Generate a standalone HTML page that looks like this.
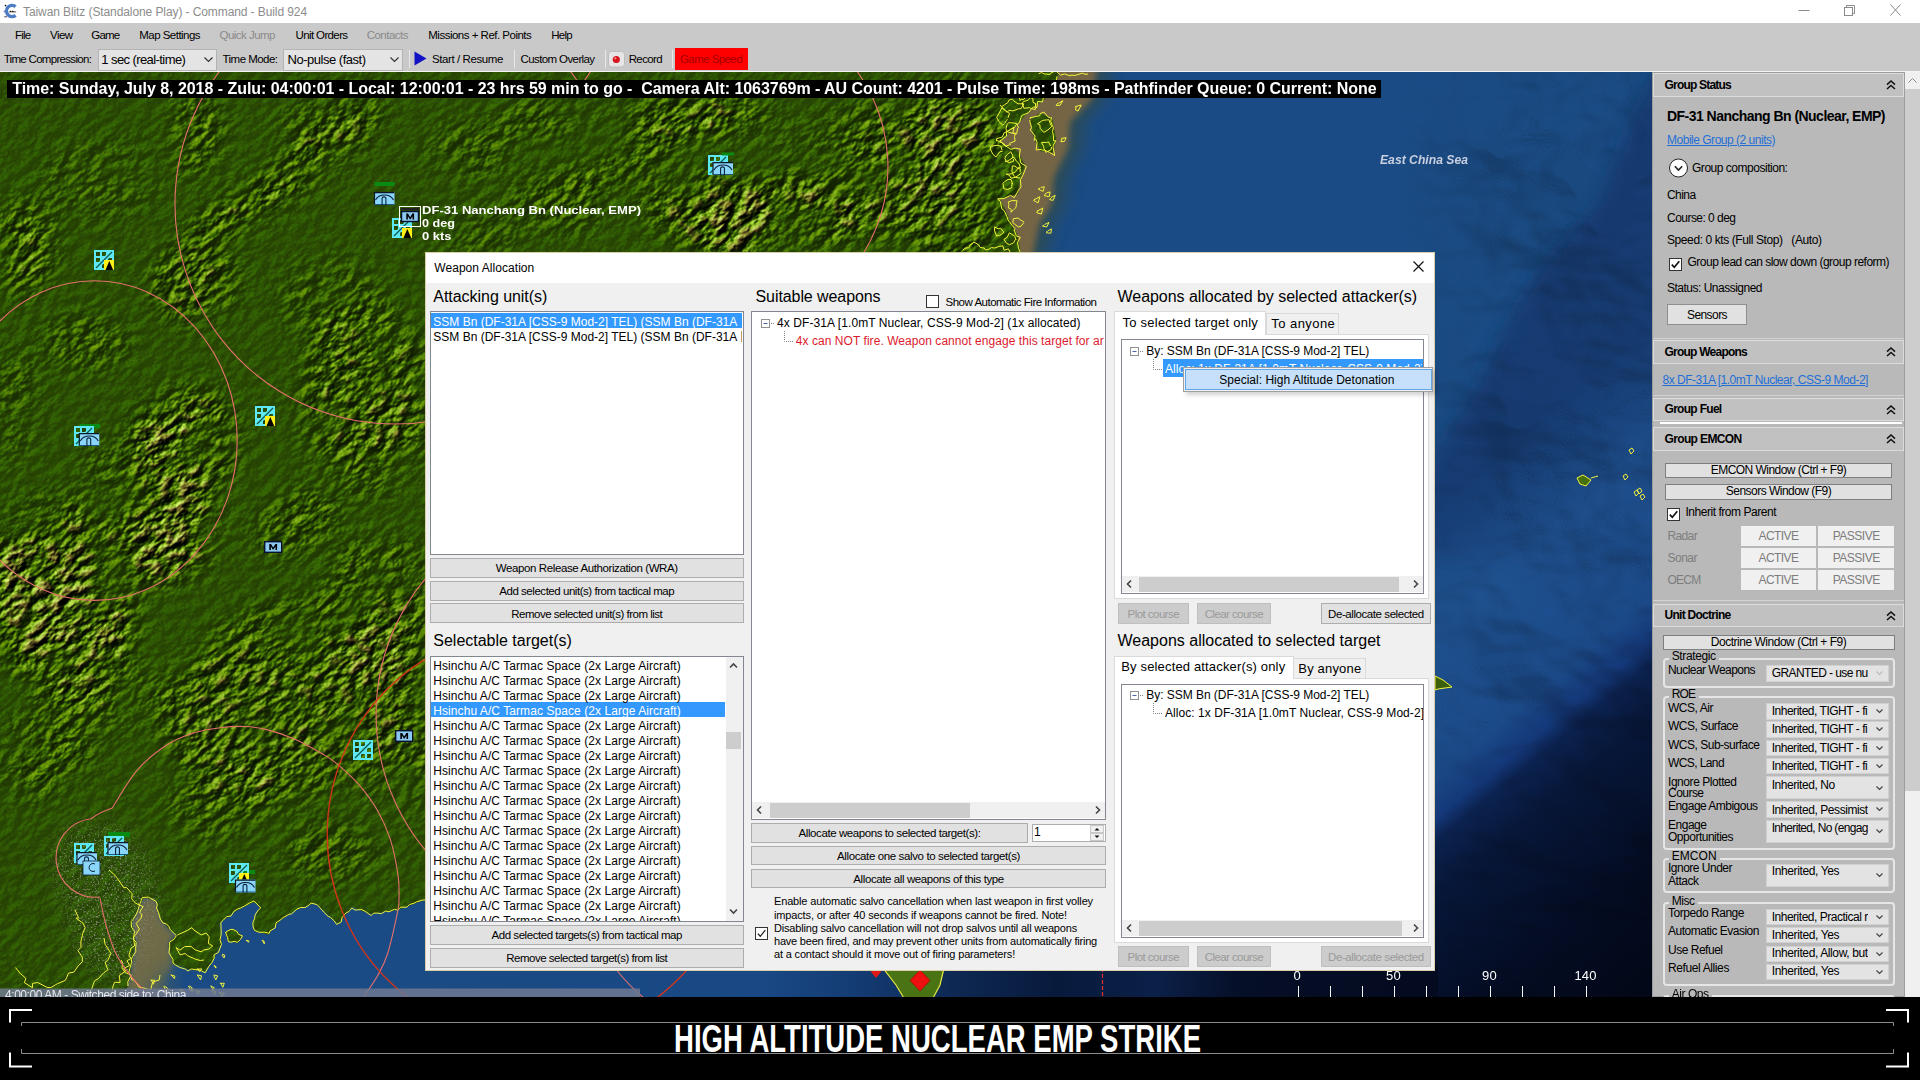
<!DOCTYPE html><html><head><meta charset="utf-8"><title>Command</title><style>

html,body{margin:0;padding:0;}
body{width:1920px;height:1080px;overflow:hidden;position:relative;background:#000;font-family:"Liberation Sans",sans-serif;font-size:12px;}
.a{position:absolute;box-sizing:border-box;}
.t{position:absolute;white-space:pre;display:block;}

</style></head><body>
<svg class="a" style="left:0;top:72px" width="1653" height="925" viewBox="0 72 1653 925">
<defs>
<filter id="terr" x="0" y="0" width="100%" height="100%" color-interpolation-filters="sRGB">
 <feColorMatrix in="SourceGraphic" type="matrix" values="0 0 0 0 0  0 0 0 0 0  0 0 0 0 0  1 0 0 0 0" result="ms"/>
 <feTurbulence type="fractalNoise" baseFrequency="0.012 0.015" numOctaves="3" seed="4" result="A"/>
 <feColorMatrix in="A" type="matrix" values="0 0 0 0 0  0 0 0 0 0  0 0 0 0 0  1 0 0 0 0" result="Aa"/>
 <feComponentTransfer in="Aa" result="mn"><feFuncA type="table" tableValues="0.3 0.3 0.3 0.45 0.8 1 1 1 1 1"/></feComponentTransfer>
 <feComposite in="ms" in2="mn" operator="in" result="m1"/>
 <feComponentTransfer in="m1" result="mask"><feFuncA type="linear" slope="0.86" intercept="0.14"/></feComponentTransfer>
 <feTurbulence type="fractalNoise" baseFrequency="0.07 0.11" numOctaves="4" seed="21" result="B"/>
 <feColorMatrix in="B" type="matrix" values="0 0 0 0 0  0 0 0 0 0  0 0 0 0 0  0 1 0 0 0" result="hB"/>
 <feDiffuseLighting in="hB" surfaceScale="5.5" diffuseConstant="1" lighting-color="#e4ffb0" result="lit"><feDistantLight azimuth="262" elevation="30"/></feDiffuseLighting>
 <feComposite in="lit" in2="mask" operator="in" result="litm"/>
 <feFlood flood-color="#728058" result="neutral"/>
 <feComposite in="litm" in2="neutral" operator="over" result="lit2"/>
 <feFlood flood-color="#335005" result="base"/>
 <feFlood flood-color="#80603a" result="brn"/>
 <feComposite in="hB" in2="mask" operator="in" result="hm0"/>
 <feColorMatrix in="hm0" type="matrix" values="0 0 0 0 0  0 0 0 0 0  0 0 0 0 0  0 0 0 5 -2.15" result="hm"/>
 <feComposite in="brn" in2="hm" operator="in" result="brn2"/>
 <feComposite in="brn2" in2="base" operator="over" result="col"/>
 <feBlend in="lit2" in2="col" mode="hard-light" result="sh"/>
 <feTurbulence type="fractalNoise" baseFrequency="0.5" numOctaves="2" seed="3" result="fine"/>
 <feColorMatrix in="fine" type="matrix" values="0 0 0 0 0.07  0 0 0 0 0.13  0 0 0 0 0  0 1.0 0 0 -0.47" result="spk"/>
 <feComposite in="spk" in2="sh" operator="over" result="all"/>
 <feComposite in="all" in2="SourceAlpha" operator="in"/>
</filter>
<filter id="urb" x="-20%" y="-20%" width="140%" height="140%" color-interpolation-filters="sRGB"><feGaussianBlur in="SourceAlpha" stdDeviation="10" result="m"/><feTurbulence type="fractalNoise" baseFrequency="0.55" numOctaves="2" seed="8" result="n"/><feColorMatrix in="n" type="matrix" values="0 0 0 0 0.52  0 0 0 0 0.55  0 0 0 0 0.47  0 0 3.4 0 -1.75" result="d"/><feComposite in="d" in2="m" operator="in"/></filter>
<filter id="b3"><feGaussianBlur stdDeviation="3"/></filter>
<filter id="b8"><feGaussianBlur stdDeviation="8"/></filter>
<filter id="b12"><feGaussianBlur stdDeviation="12"/></filter>
<filter id="b20"><feGaussianBlur stdDeviation="20"/></filter>
<filter id="b40"><feGaussianBlur stdDeviation="40"/></filter>
<filter id="seaT" x="0" y="0" width="100%" height="100%" color-interpolation-filters="sRGB">
 <feTurbulence type="fractalNoise" baseFrequency="0.006 0.009" numOctaves="4" seed="5" result="n"/>
 <feColorMatrix in="n" type="matrix" values="0 0 0 0 0  0 0 0 0 0  0 0 0 0 0  1.6 0 0 0 -0.45" result="h"/>
 <feDiffuseLighting in="h" surfaceScale="30" diffuseConstant="1" lighting-color="#fff" result="lit"><feDistantLight azimuth="135" elevation="55"/></feDiffuseLighting>
 <feComposite in="lit" in2="SourceAlpha" operator="in"/>
</filter>
<linearGradient id="seaG" gradientUnits="userSpaceOnUse" x1="1383" y1="547" x2="1703" y2="933">
 <stop offset="0" stop-color="#1d4f8e" stop-opacity="0"/><stop offset="0.2" stop-color="#1f5292" stop-opacity="0.8"/><stop offset="0.42" stop-color="#1b4a8a"/><stop offset="0.485" stop-color="#14387a"/><stop offset="0.52" stop-color="#0b2250"/><stop offset="0.6" stop-color="#07173a"/><stop offset="0.8" stop-color="#040d26"/><stop offset="1" stop-color="#030818"/>
</linearGradient>
<linearGradient id="botG" gradientUnits="userSpaceOnUse" x1="430" y1="0" x2="1440" y2="0">
 <stop offset="0" stop-color="#1a4b84"/><stop offset="0.33" stop-color="#194884"/><stop offset="0.42" stop-color="#143c74"/><stop offset="0.52" stop-color="#0d2852"/><stop offset="0.62" stop-color="#081a3c"/><stop offset="0.72" stop-color="#0b2048"/><stop offset="0.8" stop-color="#060f28"/><stop offset="1" stop-color="#040a1f"/>
</linearGradient>
<linearGradient id="fadeL" gradientUnits="userSpaceOnUse" x1="1400" y1="0" x2="1500" y2="0"><stop offset="0" stop-color="#fff" stop-opacity="0"/><stop offset="1" stop-color="#fff" stop-opacity="1"/></linearGradient><mask id="mfade" maskUnits="userSpaceOnUse" x="1380" y="72" width="273" height="925"><rect x="1380" y="72" width="273" height="925" fill="url(#fadeL)"/></mask>
<clipPath id="mapclip"><rect x="0" y="72" width="1653" height="925"/></clipPath>
</defs>
<g clip-path="url(#mapclip)">
<rect x="0" y="72" width="1653" height="925" fill="#1a4b84"/>
<path d="M1670 50L1634 114L1600 200L1540 270L1511 318L1480 380L1435 454L1400 520L1400 560L1500 560L1580 610L1620 690L1670 720Z" fill="#133a72" opacity="0.9" filter="url(#b8)"/>
<rect x="1300" y="72" width="353" height="925" fill="url(#seaG)"/>
<g mask="url(#mfade)" style="mix-blend-mode:multiply"><rect x="1380" y="72" width="273" height="925" fill="#000" filter="url(#seaT)" opacity="0.2"/></g>
<rect x="425" y="965" width="1013" height="32" fill="url(#botG)"/>
<path d="M1040 60L1112 60L1106 99L1084 122L1082 148L1068 177L1065 205L1053 225L1048 249L1046 262L990 262L990 60Z" fill="#2c4c58" filter="url(#b8)"/>
<path d="M1040 60L1098 60L1092 99L1070 122L1068 148L1054 177L1051 205L1039 225L1034 249L1032 262L990 262L990 60Z" fill="#746545" filter="url(#b3)"/>
<path d="M144 896L157 898L161 918.5L171.6 930.8L178 934.8L169.5 943L173.6 963.4L166 980L162 1000L118 1000L127 986L131 963L135 943L131 922.6L139 906Z" fill="#6e6a46" filter="url(#b3)"/>
<path d="M150 985L175 960L178 1000L140 1000Z" fill="#3a5a6a" opacity="0.7" filter="url(#b8)"/>
<clipPath id="landclip"><path d="M-5 60L1060 60L1058 78L1046 98L1030 110L1017 125L1000 142L1018 151L1025 166L1020 180L1018 194L1000 199L1008 216L1017 234L1020 249L1022 262L-5 262Z M1030 120L1040 113L1052 118L1056 139L1053 153L1040 151L1034 138Z M-5 250L440 250L440 896L430 898L398 910L370 914L352 907L338 924L315 903L296 910L280 920.6L274.5 926.7L268.4 934.8L254 930.8L253 922.6L260 907L254 902L233.7 912.4L219.5 923.6L221.5 943L213.4 959.3L205.2 971.5L189 969.5L172.6 963.4L168.5 943L176.7 934.8L170.6 930.8L160 918.5L156 900L144 898L140 906L132 922.6L136 943L132 963L128 986L120 1000L-5 1000Z M225.6 932L234 928.7L242 936L238 943L228 941Z"/></clipPath>
<g transform="rotate(-38 800 500)" filter="url(#terr)"><g transform="rotate(38 800 500)">
<path d="M-5 60L1060 60L1058 78L1046 98L1030 110L1017 125L1000 142L1018 151L1025 166L1020 180L1018 194L1000 199L1008 216L1017 234L1020 249L1022 262L-5 262Z M1030 120L1040 113L1052 118L1056 139L1053 153L1040 151L1034 138Z M-5 250L440 250L440 896L430 898L398 910L370 914L352 907L338 924L315 903L296 910L280 920.6L274.5 926.7L268.4 934.8L254 930.8L253 922.6L260 907L254 902L233.7 912.4L219.5 923.6L221.5 943L213.4 959.3L205.2 971.5L189 969.5L172.6 963.4L168.5 943L176.7 934.8L170.6 930.8L160 918.5L156 900L144 898L140 906L132 922.6L136 943L132 963L128 986L120 1000L-5 1000Z M225.6 932L234 928.7L242 936L238 943L228 941Z" fill="#000"/>
<g clip-path="url(#landclip)" filter="url(#b12)">
<ellipse cx="287" cy="174" rx="105" ry="17" fill="#ff0000" opacity="1.0" transform="rotate(-32 287 174)"/>
<ellipse cx="239" cy="213" rx="72" ry="12" fill="#ff0000" opacity="0.8" transform="rotate(-30 239 213)"/>
<ellipse cx="26" cy="247" rx="28" ry="48" fill="#ff0000" opacity="0.7" transform="rotate(0 26 247)"/>
<ellipse cx="195" cy="283" rx="45" ry="38" fill="#ff0000" opacity="0.7" transform="rotate(0 195 283)"/>
<ellipse cx="185" cy="445" rx="55" ry="55" fill="#ff0000" opacity="1.0" transform="rotate(0 185 445)"/>
<ellipse cx="366" cy="397" rx="62" ry="100" fill="#ff0000" opacity="0.75" transform="rotate(0 366 397)"/>
<ellipse cx="16" cy="408" rx="20" ry="60" fill="#ff0000" opacity="0.45" transform="rotate(0 16 408)"/>
<ellipse cx="86" cy="341" rx="45" ry="28" fill="#ff0000" opacity="0.5" transform="rotate(0 86 341)"/>
<ellipse cx="195" cy="134" rx="28" ry="40" fill="#ff0000" opacity="0.65" transform="rotate(0 195 134)"/>
<ellipse cx="60" cy="600" rx="72" ry="108" fill="#ff0000" opacity="1.0" transform="rotate(-12 60 600)"/>
<ellipse cx="165" cy="540" rx="60" ry="42" fill="#ff0000" opacity="1.0" transform="rotate(-20 165 540)"/>
<ellipse cx="290" cy="700" rx="130" ry="95" fill="#ff0000" opacity="0.7" transform="rotate(-15 290 700)"/>
<ellipse cx="45" cy="755" rx="48" ry="45" fill="#ff0000" opacity="0.6" transform="rotate(0 45 755)"/>
<ellipse cx="380" cy="610" rx="55" ry="75" fill="#ff0000" opacity="0.7" transform="rotate(0 380 610)"/>
<ellipse cx="690" cy="122" rx="58" ry="13" fill="#ff0000" opacity="1.0" transform="rotate(-25 690 122)"/>
<ellipse cx="620" cy="168" rx="52" ry="13" fill="#ff0000" opacity="0.75" transform="rotate(-20 620 168)"/>
<ellipse cx="780" cy="218" rx="98" ry="40" fill="#ff0000" opacity="1.0" transform="rotate(-8 780 218)"/>
<ellipse cx="823" cy="133" rx="46" ry="14" fill="#ff0000" opacity="0.7" transform="rotate(-15 823 133)"/>
<ellipse cx="950" cy="170" rx="62" ry="88" fill="#ff0000" opacity="0.85" transform="rotate(0 950 170)"/>
<ellipse cx="550" cy="116" rx="52" ry="20" fill="#ff0000" opacity="0.5" transform="rotate(-10 550 116)"/>
<ellipse cx="330" cy="120" rx="60" ry="25" fill="#ff0000" opacity="0.45" transform="rotate(-20 330 120)"/>
<ellipse cx="700" cy="205" rx="60" ry="35" fill="#ff0000" opacity="0.7" transform="rotate(0 700 205)"/>
<ellipse cx="880" cy="170" rx="35" ry="70" fill="#ff0000" opacity="0.7" transform="rotate(0 880 170)"/>
<ellipse cx="660" cy="112" rx="45" ry="18" fill="#ff0000" opacity="0.6" transform="rotate(-15 660 112)"/>
<ellipse cx="740" cy="120" rx="40" ry="14" fill="#ff0000" opacity="0.6" transform="rotate(-20 740 120)"/>
<ellipse cx="560" cy="200" rx="50" ry="30" fill="#ff0000" opacity="0.45" transform="rotate(0 560 200)"/>
<ellipse cx="470" cy="150" rx="40" ry="30" fill="#ff0000" opacity="0.4" transform="rotate(0 470 150)"/>
<ellipse cx="100" cy="180" rx="60" ry="40" fill="#ff0000" opacity="0.3" transform="rotate(0 100 180)"/>
<ellipse cx="330" cy="300" rx="50" ry="40" fill="#ff0000" opacity="0.4" transform="rotate(0 330 300)"/>
<ellipse cx="120" cy="700" rx="50" ry="30" fill="#ff0000" opacity="0.45" transform="rotate(0 120 700)"/>
<ellipse cx="400" cy="760" rx="40" ry="60" fill="#ff0000" opacity="0.5" transform="rotate(0 400 760)"/>
<ellipse cx="120" cy="470" rx="40" ry="25" fill="#ff0000" opacity="0.4" transform="rotate(0 120 470)"/>
<ellipse cx="300" cy="520" rx="50" ry="30" fill="#ff0000" opacity="0.55" transform="rotate(-30 300 520)"/>
<ellipse cx="230" cy="800" rx="60" ry="40" fill="#ff0000" opacity="0.5" transform="rotate(0 230 800)"/>
<ellipse cx="330" cy="850" rx="50" ry="30" fill="#ff0000" opacity="0.45" transform="rotate(0 330 850)"/>
<ellipse cx="480" cy="230" rx="40" ry="25" fill="#ff0000" opacity="0.4" transform="rotate(0 480 230)"/>
</g></g></g>
<path d="M60 830L120 822L150 860L160 905L150 950L120 985L80 960L65 910L50 870Z" fill="#000" filter="url(#urb)"/>
<path d="M883 968L944 968L940 985L932 1000L905 1000L896 985Z" fill="#4a7414" stroke="#e8e840" stroke-width="1.2"/>
<path d="M920 970L930 980.5L920 991L910 980.5Z" fill="#ee1010" stroke="#900" stroke-width="0.6"/>
<path d="M1102.5 968V1000" stroke="#e03030" stroke-width="1.2" stroke-dasharray="4 2"/>
<path d="M876 966L881 972L876 978L871 972Z" fill="#e01818"/>
<path d="M1057.1 76.3L1056.4 79.9L1053.4 85.3L1048.6 90.0L1046.1 93.7L1043.8 96.0L1042.4 102.0L1037.7 101.4L1037.0 107.4L1033.6 107.1L1032.4 107.7L1028.5 112.7L1021.7 115.6L1019.3 122.8L1015.4 125.4L1014.9 127.2L1011.6 128.5L1006.3 132.0L1006.6 136.0L1001.9 139.6L999.8 141.0L1005.1 144.8L1005.9 146.0L1010.9 149.3L1015.5 148.1L1020.4 149.1L1019.3 156.0L1019.8 158.4L1020.9 163.1L1026.3 166.4L1025.2 169.7L1022.6 175.8L1020.4 179.8L1021.0 186.9L1018.5 190.2L1015.8 195.0L1014.2 197.7L1010.6 195.4L1003.9 198.6L997.6 198.8L1000.3 201.3L1001.8 208.8L1004.1 210.5L1007.5 217.9L1007.7 219.3L1011.8 225.1L1015.0 228.6L1014.1 230.0L1016.3 235.9L1020.3 237.3L1017.4 242.7L1018.7 248.9L1022.0 256.0" stroke="#f4f43c" stroke-width="1" fill="none"/>
<path d="M1030.4 118.8L1030.0 117.8L1034.3 116.8L1039.8 115.7L1040.1 113.6L1043.9 112.0L1048.0 116.9L1050.9 118.2L1051.5 117.5L1050.6 121.7L1051.0 121.8L1052.3 125.3L1053.5 127.8L1052.4 131.3L1053.4 135.3L1053.6 140.9L1055.8 140.7L1053.3 145.2L1053.1 147.6L1054.7 155.5L1049.6 152.4L1044.4 150.0L1042.5 150.3L1041.6 149.3L1036.1 150.0L1037.1 142.7L1035.7 138.9L1034.1 140.4L1035.1 136.0L1031.5 131.3L1030.3 130.4L1031.5 127.4L1029.8 121.6L1030.0 120.0" stroke="#f4f43c" stroke-width="1" fill="none"/>
<path d="M1001.2 106.9L1004.7 104.6L1007.9 102.6L1008.9 100.1L1012.4 99.1L1014.1 101.1L1018.0 103.8L1023.8 103.8L1021.1 108.6L1018.5 108.8L1012.9 110.9L1009.1 110.2L1007.2 112.3L1004.4 109.9L1000.0 105.0" stroke="#f4f43c" stroke-width="1" fill="none"/>
<path d="M996.6 141.2L996.6 138.6L1002.1 137.1L1003.8 133.9L1003.7 133.2L1007.8 131.2L1013.9 127.6L1012.9 133.1L1015.6 133.3L1014.5 136.6L1015.1 141.2L1009.6 143.3L1010.4 144.6L1005.4 146.2L1001.2 142.1L1001.2 142.6L996.0 140.0" stroke="#f4f43c" stroke-width="1" fill="none"/>
<path d="M1005.1 161.7L1008.1 160.8L1013.0 157.5L1014.0 157.2L1016.3 161.0L1018.7 163.0L1020.5 167.6L1018.1 167.8L1015.7 171.6L1011.7 173.7L1009.0 174.1L1006.1 174.1L1009.3 175.2L1011.0 178.2L1015.2 177.4L1020.0 178.0" stroke="#f4f43c" stroke-width="1" fill="none"/>
<path d="M962.9 250.2L964.6 248.3L968.7 247.6L970.2 245.0L974.0 242.1L978.6 244.8L980.2 247.5L984.1 248.0L985.5 250.0L988.3 249.5L991.3 247.6L994.7 248.0L998.8 246.5L1002.8 245.8L1004.2 250.3L1008.4 248.8L1010.0 252.0" stroke="#f4f43c" stroke-width="1" fill="none"/>
<path d="M1038.5 73.8L1041.3 72.6L1044.3 73.9L1050.1 74.4L1050.6 73.3L1055.6 70.6L1059.9 74.5L1060.5 75.1L1064.6 73.9L1070.3 76.0L1070.3 75.1L1075.1 75.4L1077.0 74.8L1082.4 73.1L1085.0 74.3L1088.0 74.0" stroke="#f4f43c" stroke-width="1" fill="none"/>
<path d="M1075.0 106.7L1081.2 105.0L1078.1 111.0L1075.6 109.9L1076.0 107.0" stroke="#f4f43c" stroke-width="1" fill="none"/>
<path d="M1061.2 138.5L1066.1 137.6L1064.5 141.3L1060.8 141.8L1062.0 139.0" stroke="#f4f43c" stroke-width="1" fill="none"/>
<path d="M1040.6 187.5L1044.3 186.8L1043.1 191.4L1038.2 189.1L1040.0 188.0" stroke="#f4f43c" stroke-width="1" fill="none"/>
<path d="M1046.4 192.9L1050.1 191.9L1049.3 196.6L1044.2 195.7L1046.0 193.0" stroke="#f4f43c" stroke-width="1" fill="none"/>
<path d="M1034.1 199.7L1039.9 196.7L1038.1 202.9L1033.5 200.3L1035.0 199.0" stroke="#f4f43c" stroke-width="1" fill="none"/>
<path d="M1051.1 197.5L1055.2 195.3L1053.1 200.4L1049.6 199.6L1051.0 198.0" stroke="#f4f43c" stroke-width="1" fill="none"/>
<path d="M1044.5 224.6L1049.0 222.4L1046.7 227.0L1042.5 226.0L1044.0 225.0" stroke="#f4f43c" stroke-width="1" fill="none"/>
<path d="M1047.5 231.1L1051.4 228.9L1050.9 233.2L1046.6 232.9L1047.0 231.0" stroke="#f4f43c" stroke-width="1" fill="none"/>
<path d="M1038.0 210.7L1042.8 208.0L1041.4 214.0L1036.7 212.7L1038.0 210.0" stroke="#f4f43c" stroke-width="1" fill="none"/>
<path d="M1058.4 103.3L1062.8 100.7L1060.1 105.3L1056.1 105.5L1058.0 103.0" stroke="#f4f43c" stroke-width="1" fill="none"/>
<path d="M1007.3 119.1L1006.4 120.6L1004.6 123.5L1002.9 125.3L998.7 121.4L996.7 117.4L998.9 113.5L1001.9 108.0L1005.7 110.6L1009.5 113.4L1007.9 118.0" stroke="#f4f43c" stroke-width="1" fill="none"/>
<path d="M1017.7 128.1L1016.6 133.9L1012.7 133.3L1006.7 131.6L1006.0 128.5L1007.0 124.4L1008.8 122.7L1011.1 122.8L1016.8 123.4L1018.6 128.0" stroke="#f4f43c" stroke-width="1" fill="none"/>
<path d="M1002.6 151.1L999.8 151.9L995.9 157.0L992.8 154.2L990.2 149.0L990.5 146.4L996.6 145.3L1000.8 146.0L1002.0 150.0" stroke="#f4f43c" stroke-width="1" fill="none"/>
<path d="M1013.5 159.1L1013.5 161.2L1009.3 162.7L1006.1 161.3L1004.8 158.1L1006.8 154.8L1010.8 151.8L1012.7 155.4L1012.7 158.0" stroke="#f4f43c" stroke-width="1" fill="none"/>
<path d="M1021.1 172.5L1020.7 173.7L1015.7 177.1L1013.5 175.4L1012.0 171.8L1012.3 165.9L1015.0 166.2L1018.0 168.5L1020.4 168.9L1020.1 172.0" stroke="#f4f43c" stroke-width="1" fill="none"/>
<path d="M1012.0 182.9L1011.8 187.6L1007.9 189.4L1004.0 188.9L1002.9 183.4L1004.6 181.6L1008.1 179.4L1011.1 179.6L1012.5 184.0" stroke="#f4f43c" stroke-width="1" fill="none"/>
<path d="M1016.6 204.8L1015.6 207.9L1013.6 209.9L1010.9 212.2L1011.3 209.3L1008.4 207.9L1008.9 204.3L1008.2 202.0L1011.8 200.6L1017.1 200.7L1016.0 205.0" stroke="#f4f43c" stroke-width="1" fill="none"/>
<path d="M1024.0 222.4L1020.9 226.3L1018.4 227.0L1014.5 223.9L1012.8 222.7L1013.3 218.8L1018.3 218.0L1019.2 219.2L1024.0 222.0" stroke="#f4f43c" stroke-width="1" fill="none"/>
<path d="M1015.4 239.4L1013.6 242.9L1009.5 244.7L1006.6 243.3L1003.9 239.4L1007.3 237.3L1009.3 232.8L1014.7 236.1L1016.1 240.0" stroke="#f4f43c" stroke-width="1" fill="none"/>
<path d="M1035.6 103.8L1035.2 109.7L1029.2 107.7L1023.9 108.3L1022.2 102.9L1024.0 101.4L1028.1 100.2L1030.6 97.6L1032.9 98.4L1033.0 102.3L1036.3 104.0" stroke="#f4f43c" stroke-width="1" fill="none"/>
<path d="M1052.5 125.8L1048.0 129.9L1043.7 132.4L1040.1 128.2L1039.9 124.9L1037.5 123.8L1041.5 121.1L1042.9 120.3L1048.9 119.7L1050.4 124.1L1051.7 126.0" stroke="#f4f43c" stroke-width="1" fill="none"/>
<path d="M1051.7 147.1L1051.1 149.6L1045.8 152.4L1043.8 148.3L1043.7 146.6L1041.5 142.4L1046.3 142.5L1048.5 141.9L1050.6 146.0" stroke="#f4f43c" stroke-width="1" fill="none"/>
<path d="M1004.1 231.9L999.7 235.7L998.3 235.2L996.7 236.2L994.6 231.1L994.6 226.9L998.2 228.9L1000.6 228.1L1003.6 232.0" stroke="#f4f43c" stroke-width="1" fill="none"/>
<path d="M1026.3 97.0L1023.1 99.8L1021.1 99.1L1020.2 100.8L1018.5 95.7L1018.8 92.3L1021.4 93.8L1026.2 91.0L1025.5 96.0" stroke="#f4f43c" stroke-width="1" fill="none"/>
<path d="M440.3 896.4L434.1 896.6L428.9 897.1L425.2 899.8L422.5 900.1L416.4 901.9L414.6 903.0L409.4 904.6L406.9 907.2L400.6 907.2L397.7 910.2L394.4 909.3L388.9 911.8L385.7 911.0L381.4 913.7L377.4 913.1L373.5 913.2L371.2 915.6L365.1 911.3L361.7 909.6L354.9 910.0L351.8 908.0L348.9 911.6L346.3 912.7L342.0 917.4L341.3 921.9L336.7 924.4L334.3 921.0L330.3 917.3L328.2 916.4L323.6 912.0L322.5 910.5L317.3 904.8L316.4 904.5L311.1 903.0L308.8 905.4L304.9 907.6L300.8 907.5L296.9 909.1L291.7 913.8L289.1 914.3L283.1 917.6L280.1 920.2L276.0 922.8L275.2 928.0L270.0 930.9L269.2 933.3L264.7 932.2L259.1 932.3L254.4 930.2L253.2 927.0L252.8 923.1L254.6 918.5L255.0 915.2L258.2 910.1L260.8 907.9L253.9 901.0L249.9 902.8L244.7 905.9L240.5 908.1L237.8 908.9L234.1 911.1L230.9 916.1L226.6 916.6L223.1 920.4L220.9 922.4L221.1 930.0L221.2 934.3L220.0 939.7L221.5 944.5L220.8 946.0L218.4 952.5L214.0 954.7L214.2 958.2L211.9 962.6L208.9 966.3L205.2 972.8L200.2 970.2L197.1 969.9L191.6 969.0L187.9 970.9L185.5 969.2L179.7 967.4L175.5 965.0L173.0 963.0L173.0 959.5L171.2 956.5L168.9 952.7L169.7 946.7L169.5 942.2L174.2 939.1L176.3 935.6L170.4 929.8L168.7 926.3L166.3 923.9L163.1 923.1L160.3 919.0L158.4 912.3L156.5 908.1L157.4 904.4L156.0 901.3L150.8 898.5L148.5 897.1L142.4 897.5L140.7 901.5L139.1 906.3L138.3 909.2L136.4 914.2L132.8 919.8L131.2 921.5L131.5 927.1L134.8 931.7L134.1 934.1L133.6 939.4L136.2 942.5L135.7 946.8L135.8 951.7L132.8 956.3L131.3 959.1L131.7 962.2L129.8 968.5L128.8 972.4L131.0 975.7L127.8 981.7L128.0 986.0" stroke="#f4f43c" stroke-width="1" fill="none"/>
<path d="M225.6 932.3L229.0 930.2L230.8 929.4L233.1 929.5L237.2 931.6L238.3 934.3L242.5 935.9L240.5 939.4L237.5 942.2L234.1 941.4L231.0 942.2L228.4 941.7L227.6 937.5L226.5 934.9L225.6 932.0" stroke="#f4f43c" stroke-width="1" fill="none"/>
<path d="M177.4 935.1L179.5 934.0L187.7 930.3L191.9 927.6L193.8 930.0L201.2 934.9L206.2 933.1L209.2 936.8L208.4 943.4L212.7 946.0L208.8 949.1L203.8 950.0L201.0 951.8L195.0 949.8L191.0 946.4L184.6 946.6L179.9 950.1L176.2 947.6L180.0 954.8L185.2 953.5L187.6 955.7L195.6 959.3L200.3 960.5L204.0 960.0" stroke="#f4f43c" stroke-width="1" fill="none"/>
<path d="M15.4 967.5L20.2 973.4L25.9 978.3L24.4 982.7L32.5 987.7L32.6 983.4L37.7 982.5L47.1 987.4L50.8 987.6L55.8 984.6L57.6 983.6L65.3 980.4L66.5 977.9L68.5 973.1L73.9 972.1L78.2 965.9L82.4 961.7L82.3 957.1L77.9 950.6L80.9 947.5L80.9 941.8L82.7 933.6L85.2 927.5L82.9 923.0L76.0 918.2L78.6 917.9L75.0 910.0" stroke="#f4f43c" stroke-width="1" fill="none"/>
<path d="M109.0 869.9L115.2 875.5L116.6 877.5L120.8 883.2L123.6 887.7L126.7 887.6L132.2 893.7L131.7 898.8L135.5 903.2L143.2 906.7L142.0 908.1L139.8 912.4L141.9 914.5L141.1 918.2L136.2 923.6L139.4 929.0L135.3 935.3L133.4 936.8L134.2 942.5L134.5 945.9L131.1 948.0L128.9 955.1L131.0 958.5L127.0 960.6L129.6 965.5L123.5 968.6L125.7 971.1L119.3 975.4L120.1 982.5L114.5 982.2L112.8 987.1L112.0 992.0" stroke="#f4f43c" stroke-width="1" fill="none"/>
<path d="M104.1 938.0L105.0 944.1L110.9 953.4L107.6 960.8L105.1 962.3L107.9 969.8L103.9 972.6L98.2 978.8L94.6 980.7L93.3 984.2L90.4 993.2L88.0 996.0" stroke="#f4f43c" stroke-width="1" fill="none"/>
<path d="M121.2 960.0L122.8 963.5L121.9 968.1L125.4 972.7L130.4 974.6L131.8 979.8L134.2 980.0L139.3 987.3L143.6 987.9L148.1 989.4L150.8 989.7L151.4 987.0L152.6 982.0L159.2 980.0L160.0 975.0" stroke="#f4f43c" stroke-width="1" fill="none"/>
<path d="M197.1 974.9L201.5 975.8L200.6 979.9L197.2 975.0" stroke="#f4f43c" stroke-width="1" fill="none"/>
<path d="M164.3 986.1L167.7 988.3L165.8 990.4L163.7 986.3" stroke="#f4f43c" stroke-width="1" fill="none"/>
<path d="M162.9 989.9L165.3 991.0L165.1 994.3L162.1 989.9" stroke="#f4f43c" stroke-width="1" fill="none"/>
<path d="M189.1 985.9L192.2 987.8L190.8 990.3L188.4 985.9" stroke="#f4f43c" stroke-width="1" fill="none"/>
<path d="M178.7 990.3L183.1 989.5L182.0 993.2L179.4 989.4" stroke="#f4f43c" stroke-width="1" fill="none"/>
<path d="M150.8 980.1L154.7 980.3L153.4 984.2L151.0 979.7" stroke="#f4f43c" stroke-width="1" fill="none"/>
<path d="M219.9 983.4L224.3 983.2L222.8 987.3L220.5 982.8" stroke="#f4f43c" stroke-width="1" fill="none"/>
<path d="M210.7 985.9L214.2 987.7L213.4 990.0L210.7 985.8" stroke="#f4f43c" stroke-width="1" fill="none"/>
<path d="M211.3 990.4L215.5 991.1L215.1 994.6L211.4 990.9" stroke="#f4f43c" stroke-width="1" fill="none"/>
<path d="M213.6 975.0L217.7 975.9L215.8 979.9L213.8 975.5" stroke="#f4f43c" stroke-width="1" fill="none"/>
<path d="M170.7 974.8L174.9 976.1L174.4 978.6L171.1 974.9" stroke="#f4f43c" stroke-width="1" fill="none"/>
<path d="M218.8 992.6L224.5 993.5L221.9 996.6L219.7 991.9" stroke="#f4f43c" stroke-width="1" fill="none"/>
<path d="M196.5 969.3L201.8 968.9L199.7 971.7L197.5 968.4" stroke="#f4f43c" stroke-width="1" fill="none"/>
<path d="M167.2 989.0L172.3 991.3L169.9 994.5L167.5 989.7" stroke="#f4f43c" stroke-width="1" fill="none"/>
<path d="M196.0 990.7L200.2 991.6L198.0 994.3L195.6 989.9" stroke="#f4f43c" stroke-width="1" fill="none"/>
<path d="M189.7 989.5L193.9 989.3L192.3 992.1L189.8 988.8" stroke="#f4f43c" stroke-width="1" fill="none"/>
<path d="M222.0 954.1L224.9 955.3L224.0 958.0L222.0 955.0" stroke="#f4f43c" stroke-width="1" fill="none"/>
<path d="M214.1 965.7L216.0 966.7L215.9 968.1L214.0 965.0" stroke="#f4f43c" stroke-width="1" fill="none"/>
<path d="M246.3 940.7L248.7 940.8L248.9 942.2L246.0 940.0" stroke="#f4f43c" stroke-width="1" fill="none"/>
<path d="M262.3 940.3L264.1 941.2L264.4 943.9L262.0 940.0" stroke="#f4f43c" stroke-width="1" fill="none"/>
<path d="M1577 478L1583 475L1591 480L1586 486L1580 484Z" fill="#46700e" stroke="#f4f43c" stroke-width="1"/>
<path d="M1591 478L1598 476" stroke="#f4f43c" stroke-width="1"/>
<path d="M1629 450l3 -2l2 3l-3 3z" stroke="#f4f43c" stroke-width="1" fill="none"/>
<path d="M1623 476l3 -2l2 3l-3 3z" stroke="#f4f43c" stroke-width="1" fill="none"/>
<path d="M1634 492l3 -2l2 3l-3 3z" stroke="#f4f43c" stroke-width="1" fill="none"/>
<path d="M1640 496l3 -2l2 3l-3 3z" stroke="#f4f43c" stroke-width="1" fill="none"/>
<path d="M1637 490l3 -2l2 3l-3 3z" stroke="#f4f43c" stroke-width="1" fill="none"/>
<path d="M1435 676L1443 680L1452 687L1438 689L1435 690Z" fill="#3c5f0a" stroke="#f4f43c" stroke-width="1"/>
<path d="M581 86.6A220 220 0 1 0 433.2 420.7" stroke="#e4706c" stroke-width="1.1" fill="none"/>
<path d="M581 86.6A164 164 0 1 1 695.5 328.5" stroke="#e4706c" stroke-width="1.1" fill="none"/>
<ellipse cx="94.5" cy="440.6" rx="142.7" ry="159.8" stroke="#e4706c" stroke-width="1.1" fill="none"/>
<path d="M152.0 1000.0C151.0 998.7 149.3 995.7 146.0 992.0C142.7 988.3 137.1 984.1 132.0 977.6C126.9 971.1 120.0 962.2 115.6 953.0C111.2 943.8 108.0 931.8 105.4 922.6C102.8 913.4 100.9 902.1 100.0 898.0M100 897A39.3 39.3 0 1 1 91 818.7Q102 811 112 808.3M112.0 808.3C116.2 802.0 128.2 780.7 137.0 770.4C145.8 760.1 155.5 752.5 164.8 746.3C174.1 740.1 183.3 736.4 192.6 733.3C201.9 730.2 211.8 728.9 220.4 727.8C229.0 726.7 236.7 726.2 244.4 726.5C252.1 726.8 258.4 727.5 266.7 729.6C275.0 731.7 285.1 734.9 294.4 738.9C303.6 742.9 315.1 749.5 322.2 753.7C329.3 757.9 330.8 758.6 337.0 763.9C343.2 769.1 352.5 777.3 359.3 785.2C366.1 793.1 372.6 801.9 377.8 811.1C383.0 820.4 387.3 829.9 390.7 840.7C394.1 851.5 396.7 866.2 398.1 875.9C399.5 885.6 399.1 892.9 399.0 899.0C398.9 905.1 399.3 903.8 397.4 912.8C395.5 921.8 391.0 942.6 387.8 953.0C384.6 963.4 381.9 967.9 378.0 975.0C374.1 982.1 367.7 990.9 364.7 995.6C361.7 1000.3 360.8 1001.8 360.0 1003.0" stroke="#e4706c" stroke-width="1.1" fill="none"/>
<circle cx="587.7" cy="714.4" r="211.6" stroke="#e4706c" stroke-width="1.1" fill="none"/>
<circle cx="532.6" cy="834.3" r="205.4" stroke="#d63418" stroke-width="1.3" fill="none"/>
<path d="M615 968Q628 985 645 999" stroke="#e4706c" stroke-width="1.1" fill="none"/>
<text x="1380" y="163.5" font-family="Liberation Sans, sans-serif" font-size="12" font-style="italic" font-weight="bold" fill="#c8cfe0" textLength="88" lengthAdjust="spacingAndGlyphs">East China Sea</text>
<g transform="translate(94 250)"><path fill-rule="evenodd" fill="#5ee8f4" d="M0 0H20V20H0Z M2 2V6H6V2Z M8 2V6H12V2Z M2 8V12H6V8Z M14 8V12H18V8Z M8 14V18H12V14Z M14 14V18H18V14Z"/><path d="M2 18L18 2" stroke="#5ee8f4" stroke-width="4.5"/><path d="M2 18L18 2" stroke="#0d5a50" stroke-width="1.3"/><rect x="10" y="10" width="10" height="10" fill="#fff01a"/><path d="M11.5 20L15.3 11L19.2 20Z" fill="#000"/></g>
<g transform="translate(374.5 192)"><rect x="0" y="-10" width="20" height="4" fill="#0a8a12"/><rect x="0" y="0" width="20" height="13" fill="#8ad6fa"/><path d="M0 13V0.6H20" stroke="#0a1828" stroke-width="1.2" fill="none"/><path d="M0 12.5H20" stroke="#1a5a80" stroke-width="1"/><path d="M1 8C3 4 6 3 10 3C14 3 17 4 19 8M7.6 13V6.2C7.6 4.4 11.4 4.4 11.4 6.2V13" stroke="#0a2038" stroke-width="1.1" fill="none"/></g>
<g transform="translate(708 155)"><path fill-rule="evenodd" fill="#5ee8f4" d="M0 0H20V20H0Z M2 2V6H6V2Z M8 2V6H12V2Z M2 8V12H6V8Z M14 8V12H18V8Z M8 14V18H12V14Z M14 14V18H18V14Z"/><path d="M2 18L18 2" stroke="#5ee8f4" stroke-width="4.5"/><path d="M2 18L18 2" stroke="#0d5a50" stroke-width="1.3"/></g>
<rect x="722" y="152.5" width="12" height="3" fill="#0a8a12"/>
<g transform="translate(713 162)"><rect x="0" y="0" width="20" height="13" fill="#8ad6fa"/><path d="M0 13V0.6H20" stroke="#0a1828" stroke-width="1.2" fill="none"/><path d="M0 12.5H20" stroke="#1a5a80" stroke-width="1"/><path d="M1 8C3 4 6 3 10 3C14 3 17 4 19 8M7.6 13V6.2C7.6 4.4 11.4 4.4 11.4 6.2V13" stroke="#0a2038" stroke-width="1.1" fill="none"/></g>
<g transform="translate(255 406)"><path fill-rule="evenodd" fill="#5ee8f4" d="M0 0H20V20H0Z M2 2V6H6V2Z M8 2V6H12V2Z M2 8V12H6V8Z M14 8V12H18V8Z M8 14V18H12V14Z M14 14V18H18V14Z"/><path d="M2 18L18 2" stroke="#5ee8f4" stroke-width="4.5"/><path d="M2 18L18 2" stroke="#0d5a50" stroke-width="1.3"/><rect x="10" y="10" width="10" height="10" fill="#fff01a"/><path d="M11.5 20L15.3 11L19.2 20Z" fill="#000"/></g>
<rect x="80" y="424" width="20" height="4" fill="#0a8a12"/>
<g transform="translate(74 426)"><path fill-rule="evenodd" fill="#5ee8f4" d="M0 0H20V20H0Z M2 2V6H6V2Z M8 2V6H12V2Z M2 8V12H6V8Z M14 8V12H18V8Z M8 14V18H12V14Z M14 14V18H18V14Z"/><path d="M2 18L18 2" stroke="#5ee8f4" stroke-width="4.5"/><path d="M2 18L18 2" stroke="#0d5a50" stroke-width="1.3"/></g>
<g transform="translate(79.3 433)"><rect x="0" y="0" width="20" height="13" fill="#8ad6fa"/><path d="M0 13V0.6H20" stroke="#0a1828" stroke-width="1.2" fill="none"/><path d="M0 12.5H20" stroke="#1a5a80" stroke-width="1"/><path d="M1 8C3 4 6 3 10 3C14 3 17 4 19 8M7.6 13V6.2C7.6 4.4 11.4 4.4 11.4 6.2V13" stroke="#0a2038" stroke-width="1.1" fill="none"/></g>
<g transform="translate(264 541)"><rect x="0.7" y="0.7" width="17" height="10.6" fill="#8cc8f0" stroke="#081030" stroke-width="1.4"/><path d="M5.3 9V3H7L9.2 6.6L11.4 3H13.1V9H11.5V5.6L9.6 8.6H8.8L6.9 5.6V9Z" fill="#000"/></g>
<g transform="translate(395 730)"><rect x="0.7" y="0.7" width="17" height="10.6" fill="#8cc8f0" stroke="#081030" stroke-width="1.4"/><path d="M5.3 9V3H7L9.2 6.6L11.4 3H13.1V9H11.5V5.6L9.6 8.6H8.8L6.9 5.6V9Z" fill="#000"/></g>
<g transform="translate(353 740)"><path fill-rule="evenodd" fill="#5ee8f4" d="M0 0H20V20H0Z M2 2V6H6V2Z M8 2V6H12V2Z M2 8V12H6V8Z M14 8V12H18V8Z M8 14V18H12V14Z M14 14V18H18V14Z"/><path d="M2 18L18 2" stroke="#5ee8f4" stroke-width="4.5"/><path d="M2 18L18 2" stroke="#0d5a50" stroke-width="1.3"/></g>
<g transform="translate(74 843)"><path fill-rule="evenodd" fill="#5ee8f4" d="M0 0H20V20H0Z M2 2V6H6V2Z M8 2V6H12V2Z M2 8V12H6V8Z M14 8V12H18V8Z M8 14V18H12V14Z M14 14V18H18V14Z"/><path d="M2 18L18 2" stroke="#5ee8f4" stroke-width="4.5"/><path d="M2 18L18 2" stroke="#0d5a50" stroke-width="1.3"/></g>
<g transform="translate(77 852)"><rect x="0" y="0" width="20" height="13" fill="#8ad6fa"/><path d="M0 13V0.6H20" stroke="#0a1828" stroke-width="1.2" fill="none"/><path d="M0 12.5H20" stroke="#1a5a80" stroke-width="1"/><path d="M1 8C3 4 6 3 10 3C14 3 17 4 19 8M7.6 13V6.2C7.6 4.4 11.4 4.4 11.4 6.2V13" stroke="#0a2038" stroke-width="1.1" fill="none"/></g>
<rect x="83" y="861" width="17" height="14" fill="#8ad6fa" stroke="#0a2038" stroke-width="0.8"/><path d="M95 864a4 4 0 1 0 0 7" stroke="#0a2038" fill="none"/>
<rect x="108" y="832" width="22" height="5" fill="#0a8a12"/>
<g transform="translate(104 836)"><path fill-rule="evenodd" fill="#5ee8f4" d="M0 0H20V20H0Z M2 2V6H6V2Z M8 2V6H12V2Z M2 8V12H6V8Z M14 8V12H18V8Z M8 14V18H12V14Z M14 14V18H18V14Z"/><path d="M2 18L18 2" stroke="#5ee8f4" stroke-width="4.5"/><path d="M2 18L18 2" stroke="#0d5a50" stroke-width="1.3"/></g>
<g transform="translate(108 842)"><rect x="0" y="0" width="20" height="13" fill="#8ad6fa"/><path d="M0 13V0.6H20" stroke="#0a1828" stroke-width="1.2" fill="none"/><path d="M0 12.5H20" stroke="#1a5a80" stroke-width="1"/><path d="M1 8C3 4 6 3 10 3C14 3 17 4 19 8M7.6 13V6.2C7.6 4.4 11.4 4.4 11.4 6.2V13" stroke="#0a2038" stroke-width="1.1" fill="none"/></g>
<rect x="243" y="870" width="12" height="4" fill="#0a8a12"/>
<g transform="translate(229 863)"><path fill-rule="evenodd" fill="#5ee8f4" d="M0 0H20V20H0Z M2 2V6H6V2Z M8 2V6H12V2Z M2 8V12H6V8Z M14 8V12H18V8Z M8 14V18H12V14Z M14 14V18H18V14Z"/><path d="M2 18L18 2" stroke="#5ee8f4" stroke-width="4.5"/><path d="M2 18L18 2" stroke="#0d5a50" stroke-width="1.3"/><rect x="10" y="10" width="10" height="10" fill="#fff01a"/><path d="M11.5 20L15.3 11L19.2 20Z" fill="#000"/></g>
<g transform="translate(235.5 879.5)"><rect x="0" y="0" width="20" height="13" fill="#8ad6fa"/><path d="M0 13V0.6H20" stroke="#0a1828" stroke-width="1.2" fill="none"/><path d="M0 12.5H20" stroke="#1a5a80" stroke-width="1"/><path d="M1 8C3 4 6 3 10 3C14 3 17 4 19 8M7.6 13V6.2C7.6 4.4 11.4 4.4 11.4 6.2V13" stroke="#0a2038" stroke-width="1.1" fill="none"/></g>
<g transform="translate(392 218)"><path fill-rule="evenodd" fill="#5ee8f4" d="M0 0H20V20H0Z M2 2V6H6V2Z M8 2V6H12V2Z M2 8V12H6V8Z M14 8V12H18V8Z M8 14V18H12V14Z M14 14V18H18V14Z"/><path d="M2 18L18 2" stroke="#5ee8f4" stroke-width="4.5"/><path d="M2 18L18 2" stroke="#0d5a50" stroke-width="1.3"/><rect x="10" y="10" width="10" height="10" fill="#fff01a"/><path d="M11.5 20L15.3 11L19.2 20Z" fill="#000"/></g>
<rect x="401.5" y="211.5" width="17" height="10" fill="#8cc8f0" stroke="#081030" stroke-width="1.4"/><path d="M406.3 219.6V213.6H408L410.2 217.2L412.4 213.6H414.1V219.6H412.5V216.2L410.6 219.2H409.8L407.9 216.2V219.6Z" fill="#000"/><path d="M401 209H419" stroke="#222" stroke-width="2"/>
<rect x="399.5" y="206.5" width="21" height="20" fill="none" stroke="#fff" stroke-width="1"/>
<rect x="0" y="988.5" width="640" height="9" fill="#6e7890" opacity="0.85"/>
<path d="M1298.5 986V997M1330.5 986V997M1362.5 986V997M1394.5 986V997M1426.5 986V997M1458.5 986V997M1490.5 986V997M1522.5 986V997M1554.5 986V997M1586.5 986V997" stroke="#fff" stroke-width="1"/>
</g></svg>
<span class="t" style="left:421.7px;top:202.69px;font-size:11px;line-height:15px;color:#fff;font-weight:bold;transform:scaleX(1.1864);transform-origin:0 0;">DF-31 Nanchang Bn (Nuclear, EMP)</span>
<span class="t" style="left:421.7px;top:215.69px;font-size:11px;line-height:15px;color:#fff;font-weight:bold;transform:scaleX(1.1485);transform-origin:0 0;">0 deg</span>
<span class="t" style="left:421.7px;top:229.29px;font-size:11px;line-height:15px;color:#fff;font-weight:bold;transform:scaleX(1.1763);transform-origin:0 0;">0 kts</span>
<span class="t" style="left:1293.5px;top:966.50px;font-size:13px;line-height:18px;color:#fff;letter-spacing:-0.234px;">0</span>
<span class="t" style="left:1386px;top:966.50px;font-size:13px;line-height:18px;color:#fff;letter-spacing:0.266px;">50</span>
<span class="t" style="left:1482px;top:966.50px;font-size:13px;line-height:18px;color:#fff;letter-spacing:0.266px;">90</span>
<span class="t" style="left:1574.5px;top:966.50px;font-size:13px;line-height:18px;color:#fff;letter-spacing:0.099px;">140</span>
<div class="a" style="left:0;top:988px;width:640px;height:9px;overflow:hidden">
<span class="t" style="left:5px;top:-0.56px;font-size:12px;line-height:16px;color:#e8e8f0;letter-spacing:-0.438px;">4:00:00 AM - Switched side to: China</span>
</div>
<div class="a" style="left:0px;top:0px;width:1920px;height:23px;background:#ffffff;"></div>
<svg class="a" style="left:0;top:0" width="22" height="22" viewBox="0 0 22 22"><path d="M15.6 6.6A5.6 5.6 0 1 0 15.6 15.4" stroke="#4c7cc4" stroke-width="3.4" fill="none"/><path d="M3.2 11.4L5 10.2V12.8Z" fill="#6a8fc8"/><path d="M8.8 12.2H16.5L15.5 11.6H13.6L12.8 10.6L12 11.4H11L10.4 10.4L9.6 11.4Z" fill="#000"/><circle cx="5.5" cy="5.6" r="0.8" fill="#000"/><path d="M4.2 16.8H7" stroke="#222" stroke-width="0.8"/></svg>
<span class="t" style="left:23px;top:3.84px;font-size:12px;line-height:16px;color:#8c8c8c;letter-spacing:-0.093px;">Taiwan Blitz (Standalone Play) - Command - Build 924</span>
<svg class="a" style="left:1790px;top:0" width="130" height="23" viewBox="0 0 130 23"><g stroke="#8a8a8a" stroke-width="1" fill="none"><path d="M8.5 10.5H19.5"/><rect x="54.5" y="7.5" width="8" height="8"/><path d="M56.5 7.5V5.5H64.5V13.5H62.5"/><path d="M100.5 4.5L110.5 15.5M110.5 4.5L100.5 15.5"/></g></svg>
<div class="a" style="left:0px;top:23px;width:1920px;height:49px;background:#c9c9c9;"></div>
<div class="a" style="left:0px;top:71px;width:1920px;height:1px;background:#f4f4f4;"></div>
<span class="t" style="left:15px;top:26.82px;font-size:11.5px;line-height:16px;color:#000;letter-spacing:-0.758px;">File</span>
<span class="t" style="left:50px;top:26.82px;font-size:11.5px;line-height:16px;color:#000;letter-spacing:-0.555px;">View</span>
<span class="t" style="left:91.3px;top:26.82px;font-size:11.5px;line-height:16px;color:#000;letter-spacing:-0.832px;">Game</span>
<span class="t" style="left:139.3px;top:26.82px;font-size:11.5px;line-height:16px;color:#000;letter-spacing:-0.535px;">Map Settings</span>
<span class="t" style="left:219.5px;top:26.82px;font-size:11.5px;line-height:16px;color:#8a8a8a;letter-spacing:-0.522px;">Quick Jump</span>
<span class="t" style="left:295.5px;top:26.82px;font-size:11.5px;line-height:16px;color:#000;letter-spacing:-0.618px;">Unit Orders</span>
<span class="t" style="left:366.7px;top:26.82px;font-size:11.5px;line-height:16px;color:#8a8a8a;letter-spacing:-0.511px;">Contacts</span>
<span class="t" style="left:428.3px;top:26.82px;font-size:11.5px;line-height:16px;color:#000;letter-spacing:-0.504px;">Missions + Ref. Points</span>
<span class="t" style="left:551.3px;top:26.82px;font-size:11.5px;line-height:16px;color:#000;letter-spacing:-0.739px;">Help</span>
<span class="t" style="left:3.7px;top:50.62px;font-size:11.5px;line-height:16px;color:#000;letter-spacing:-0.693px;">Time Compression:</span>
<div class="a" style="left:98px;top:49px;width:119px;height:22px;background:#e4e4e4;border:1px solid #b4b4b4;box-sizing:border-box;"></div>
<span class="t" style="left:101.3px;top:50.80px;font-size:13px;line-height:18px;color:#000;letter-spacing:-0.584px;">1 sec (real-time)</span>
<svg class="a" style="left:203px;top:55px" width="12" height="10"><path d="M1.5 2.5L5.5 6.5L9.5 2.5" stroke="#333" stroke-width="1.2" fill="none"/></svg>
<span class="t" style="left:222.5px;top:50.62px;font-size:11.5px;line-height:16px;color:#000;letter-spacing:-0.530px;">Time Mode:</span>
<div class="a" style="left:283px;top:49px;width:120px;height:22px;background:#e4e4e4;border:1px solid #b4b4b4;box-sizing:border-box;"></div>
<span class="t" style="left:287.5px;top:50.80px;font-size:13px;line-height:18px;color:#000;letter-spacing:-0.483px;">No-pulse (fast)</span>
<svg class="a" style="left:389px;top:55px" width="12" height="10"><path d="M1.5 2.5L5.5 6.5L9.5 2.5" stroke="#333" stroke-width="1.2" fill="none"/></svg>
<div class="a" style="left:409px;top:50px;width:1px;height:18px;background:#e8e8e8;"></div>
<div class="a" style="left:514px;top:50px;width:1px;height:18px;background:#e8e8e8;"></div>
<div class="a" style="left:605px;top:50px;width:1px;height:18px;background:#e8e8e8;"></div>
<div class="a" style="left:672px;top:50px;width:1px;height:18px;background:#e8e8e8;"></div>
<svg class="a" style="left:414px;top:51px" width="14" height="16"><path d="M0.5 0.5L12.5 7.5L0.5 14.5Z" fill="#1212c4"/></svg>
<span class="t" style="left:432px;top:50.62px;font-size:11.5px;line-height:16px;color:#000;letter-spacing:-0.407px;">Start / Resume</span>
<span class="t" style="left:520.5px;top:50.62px;font-size:11.5px;line-height:16px;color:#000;letter-spacing:-0.603px;">Custom Overlay</span>
<svg class="a" style="left:608px;top:51px" width="18" height="17"><rect x="0.5" y="0.5" width="16" height="15.5" rx="3" fill="#e6e6e6" stroke="#bdbdbd"/><circle cx="8.3" cy="8.5" r="3.6" fill="#d8141c"/><circle cx="7.3" cy="7.3" r="1.1" fill="#f08a8a"/></svg>
<span class="t" style="left:628.7px;top:50.62px;font-size:11.5px;line-height:16px;color:#000;letter-spacing:-0.630px;">Record</span>
<div class="a" style="left:675px;top:48px;width:73px;height:22px;background:#ff0000;"></div>
<span class="t" style="left:680px;top:50.62px;font-size:11.5px;line-height:16px;color:#a40000;letter-spacing:-0.577px;">Game Speed</span>
<div class="a" style="left:7px;top:79.5px;width:1374px;height:18px;background:#000;"></div>
<span class="t" style="left:12.2px;top:77.76px;font-size:16px;line-height:21px;color:#fff;font-weight:bold;letter-spacing:-0.040px;">Time: Sunday, July 8, 2018 - Zulu: 04:00:01 - Local: 12:00:01 - 23 hrs 59 min to go -  Camera Alt: 1063769m - AU Count: 4201 - Pulse Time: 198ms - Pathfinder Queue: 0 Current: None</span>
<div class="a" style="left:1652px;top:72px;width:253px;height:925px;background:#b9b9b9;border:1px solid #9c9c9c;box-sizing:border-box;"></div>
<div class="a" style="left:1905px;top:72px;width:15px;height:925px;background:#f0f0f0;"></div>
<div class="a" style="left:1905px;top:89px;width:15px;height:702px;background:#cdcdcd;"></div>
<svg class="a" style="left:1905px;top:72px" width="15" height="17"><path d="M3.5 10.5L7.5 6.5L11.5 10.5" stroke="#8a8a8a" stroke-width="1" fill="none"/></svg>
<div class="a" style="left:1653px;top:73px;width:251px;height:24px;background:#c1c1c1;border:1px solid #dcdcdc;box-sizing:border-box;"></div>
<span class="t" style="left:1664.5px;top:76.54px;font-size:12px;line-height:16px;color:#000;font-weight:bold;letter-spacing:-0.793px;">Group Status</span>
<svg class="a" style="left:1886px;top:80px" width="10" height="10" viewBox="0 0 10 10"><path d="M1 4.6L5 1L9 4.6M1 9L5 5.4L9 9" stroke="#111" stroke-width="1.5" fill="none"/></svg>
<span class="t" style="left:1667px;top:106.85px;font-size:14px;line-height:19px;color:#000;font-weight:bold;letter-spacing:-0.529px;">DF-31 Nanchang Bn (Nuclear, EMP)</span>
<span class="t" style="left:1667px;top:131.84px;font-size:12px;line-height:16px;color:#1f6fd6;text-decoration:underline;letter-spacing:-0.487px;">Mobile Group (2 units)</span>
<svg class="a" style="left:1668px;top:157px" width="22" height="22" viewBox="0 0 22 22"><circle cx="10.5" cy="11" r="9" fill="#fff" stroke="#222" stroke-width="1"/><path d="M6.8 9.3L10.5 13L14.2 9.3" stroke="#222" stroke-width="1.6" fill="none"/></svg>
<span class="t" style="left:1692px;top:159.84px;font-size:12px;line-height:16px;color:#000;letter-spacing:-0.476px;">Group composition:</span>
<span class="t" style="left:1667px;top:186.84px;font-size:12px;line-height:16px;color:#000;letter-spacing:-0.572px;">China</span>
<span class="t" style="left:1667px;top:209.84px;font-size:12px;line-height:16px;color:#000;letter-spacing:-0.530px;">Course: 0 deg</span>
<span class="t" style="left:1667px;top:231.84px;font-size:12px;line-height:16px;color:#000;letter-spacing:-0.411px;">Speed: 0 kts (Full Stop)   (Auto)</span>
<svg class="a" style="left:1668.5px;top:258px" width="13" height="13" viewBox="0 0 13 13"><rect x="0.5" y="0.5" width="12" height="12" fill="#fff" stroke="#333"/><path d="M2.8 6.6L5.3 9.3L10.3 3.2" stroke="#111" stroke-width="1.7" fill="none"/></svg>
<span class="t" style="left:1687.5px;top:253.84px;font-size:12px;line-height:16px;color:#000;letter-spacing:-0.511px;">Group lead can slow down (group reform)</span>
<span class="t" style="left:1667px;top:279.84px;font-size:12px;line-height:16px;color:#000;letter-spacing:-0.503px;">Status: Unassigned</span>
<div class="a" style="left:1667px;top:304px;width:80px;height:21px;background:#e1e1e1;border:1px solid #8f8f8f;box-sizing:border-box;"></div>
<span class="t" style="left:1687px;top:306.84px;font-size:12px;line-height:16px;color:#000;letter-spacing:-0.576px;">Sensors</span>
<div class="a" style="left:1653px;top:338px;width:251px;height:1px;background:#d2d2d2;"></div>
<div class="a" style="left:1653px;top:340px;width:251px;height:24px;background:#c1c1c1;border:1px solid #dcdcdc;box-sizing:border-box;"></div>
<span class="t" style="left:1664.5px;top:343.54px;font-size:12px;line-height:16px;color:#000;font-weight:bold;letter-spacing:-0.766px;">Group Weapons</span>
<svg class="a" style="left:1886px;top:347px" width="10" height="10" viewBox="0 0 10 10"><path d="M1 4.6L5 1L9 4.6M1 9L5 5.4L9 9" stroke="#111" stroke-width="1.5" fill="none"/></svg>
<span class="t" style="left:1662.5px;top:371.64px;font-size:12px;line-height:16px;color:#1f6fd6;text-decoration:underline;letter-spacing:-0.484px;">8x DF-31A [1.0mT Nuclear, CSS-9 Mod-2]</span>
<div class="a" style="left:1653px;top:395px;width:251px;height:1px;background:#d2d2d2;"></div>
<div class="a" style="left:1653px;top:398px;width:251px;height:23px;background:#c1c1c1;border:1px solid #dcdcdc;box-sizing:border-box;"></div>
<span class="t" style="left:1664.5px;top:401.04px;font-size:12px;line-height:16px;color:#000;font-weight:bold;letter-spacing:-0.700px;">Group Fuel</span>
<svg class="a" style="left:1886px;top:404.5px" width="10" height="10" viewBox="0 0 10 10"><path d="M1 4.6L5 1L9 4.6M1 9L5 5.4L9 9" stroke="#111" stroke-width="1.5" fill="none"/></svg>
<div class="a" style="left:1660px;top:422px;width:242px;height:2px;background:#ffffff;"></div>
<div class="a" style="left:1653px;top:427px;width:251px;height:24px;background:#c1c1c1;border:1px solid #dcdcdc;box-sizing:border-box;"></div>
<span class="t" style="left:1664.5px;top:430.54px;font-size:12px;line-height:16px;color:#000;font-weight:bold;letter-spacing:-0.636px;">Group EMCON</span>
<svg class="a" style="left:1886px;top:434px" width="10" height="10" viewBox="0 0 10 10"><path d="M1 4.6L5 1L9 4.6M1 9L5 5.4L9 9" stroke="#111" stroke-width="1.5" fill="none"/></svg>
<div class="a" style="left:1665px;top:463px;width:227px;height:15px;background:#e1e1e1;border:1px solid #7e7e7e;box-sizing:border-box;"></div>
<span class="t" style="left:1710.75px;top:461.54px;font-size:12px;line-height:16px;color:#000;letter-spacing:-0.536px;">EMCON Window (Ctrl + F9)</span>
<div class="a" style="left:1665px;top:484px;width:227px;height:16px;background:#e1e1e1;border:1px solid #7e7e7e;box-sizing:border-box;"></div>
<span class="t" style="left:1725.75px;top:483.04px;font-size:12px;line-height:16px;color:#000;letter-spacing:-0.520px;">Sensors Window (F9)</span>
<svg class="a" style="left:1666.5px;top:507.5px" width="13" height="13" viewBox="0 0 13 13"><rect x="0.5" y="0.5" width="12" height="12" fill="#fff" stroke="#333"/><path d="M2.8 6.6L5.3 9.3L10.3 3.2" stroke="#111" stroke-width="1.7" fill="none"/></svg>
<span class="t" style="left:1685.5px;top:504.14px;font-size:12px;line-height:16px;color:#000;letter-spacing:-0.467px;">Inherit from Parent</span>
<span class="t" style="left:1667.5px;top:528.04px;font-size:12px;line-height:16px;color:#7d7d7d;letter-spacing:-0.637px;">Radar</span>
<div class="a" style="left:1741px;top:526px;width:75px;height:20px;background:#f0f0f0;"></div>
<div class="a" style="left:1818px;top:526px;width:76px;height:20px;background:#f0f0f0;"></div>
<span class="t" style="left:1758.5px;top:528.04px;font-size:12px;line-height:16px;color:#7d7d7d;letter-spacing:-0.557px;">ACTIVE</span>
<span class="t" style="left:1832.7px;top:528.04px;font-size:12px;line-height:16px;color:#7d7d7d;letter-spacing:-0.496px;">PASSIVE</span>
<span class="t" style="left:1667.5px;top:550.24px;font-size:12px;line-height:16px;color:#7d7d7d;letter-spacing:-0.506px;">Sonar</span>
<div class="a" style="left:1741px;top:548px;width:75px;height:20px;background:#f0f0f0;"></div>
<div class="a" style="left:1818px;top:548px;width:76px;height:20px;background:#f0f0f0;"></div>
<span class="t" style="left:1758.5px;top:550.24px;font-size:12px;line-height:16px;color:#7d7d7d;letter-spacing:-0.557px;">ACTIVE</span>
<span class="t" style="left:1832.7px;top:550.24px;font-size:12px;line-height:16px;color:#7d7d7d;letter-spacing:-0.496px;">PASSIVE</span>
<span class="t" style="left:1667.5px;top:572.44px;font-size:12px;line-height:16px;color:#7d7d7d;letter-spacing:-0.750px;">OECM</span>
<div class="a" style="left:1741px;top:570px;width:75px;height:20px;background:#f0f0f0;"></div>
<div class="a" style="left:1818px;top:570px;width:76px;height:20px;background:#f0f0f0;"></div>
<span class="t" style="left:1758.5px;top:572.44px;font-size:12px;line-height:16px;color:#7d7d7d;letter-spacing:-0.557px;">ACTIVE</span>
<span class="t" style="left:1832.7px;top:572.44px;font-size:12px;line-height:16px;color:#7d7d7d;letter-spacing:-0.496px;">PASSIVE</span>
<div class="a" style="left:1653px;top:600px;width:251px;height:1px;background:#d2d2d2;"></div>
<div class="a" style="left:1653px;top:604px;width:251px;height:23px;background:#c1c1c1;border:1px solid #dcdcdc;box-sizing:border-box;"></div>
<span class="t" style="left:1664.5px;top:607.04px;font-size:12px;line-height:16px;color:#000;font-weight:bold;letter-spacing:-0.719px;">Unit Doctrine</span>
<svg class="a" style="left:1886px;top:610.5px" width="10" height="10" viewBox="0 0 10 10"><path d="M1 4.6L5 1L9 4.6M1 9L5 5.4L9 9" stroke="#111" stroke-width="1.5" fill="none"/></svg>
<div class="a" style="left:1663px;top:635px;width:232px;height:15px;background:#e1e1e1;border:1px solid #7e7e7e;box-sizing:border-box;"></div>
<span class="t" style="left:1710.75px;top:633.54px;font-size:12px;line-height:16px;color:#000;letter-spacing:-0.477px;">Doctrine Window (Ctrl + F9)</span>
<div class="a" style="left:1663px;top:658px;width:232px;height:30px;border:2px solid #e6e6e6;box-sizing:border-box;border-radius:4px;"></div>
<div class="a" style="left:1669px;top:653px;width:50px;height:12px;background:#b9b9b9;"></div>
<span class="t" style="left:1671.7px;top:648.34px;font-size:12px;line-height:16px;color:#000;letter-spacing:-0.373px;">Strategic</span>
<span class="t" style="left:1668px;top:661.64px;font-size:12px;line-height:16px;color:#000;letter-spacing:-0.545px;">Nuclear Weapons</span>
<div class="a" style="left:1766px;top:665px;width:123px;height:17px;background:#e3e3e3;border:1px solid #d0d0d0;box-sizing:border-box;"></div>
<span class="t" style="left:1771.7px;top:664.84px;font-size:12px;line-height:16px;color:#000;letter-spacing:-0.586px;width:96px;overflow:hidden;">GRANTED - use nu</span>
<svg class="a" style="left:1875px;top:670.25px" width="10" height="7"><path d="M1.5 1.5L4.5 4.5L7.5 1.5" stroke="#bbb" stroke-width="1.2" fill="none"/></svg>
<div class="a" style="left:1663px;top:696px;width:232px;height:154px;border:2px solid #e6e6e6;box-sizing:border-box;border-radius:4px;"></div>
<div class="a" style="left:1669px;top:691px;width:30px;height:12px;background:#b9b9b9;"></div>
<span class="t" style="left:1671.7px;top:686.34px;font-size:12px;line-height:16px;color:#000;letter-spacing:-0.839px;">ROE</span>
<span class="t" style="left:1668px;top:699.64px;font-size:12px;line-height:16px;color:#000;letter-spacing:-0.459px;">WCS, Air</span>
<div class="a" style="left:1766px;top:703px;width:123px;height:17px;background:#e3e3e3;border:1px solid #d0d0d0;box-sizing:border-box;"></div>
<span class="t" style="left:1771.7px;top:703.34px;font-size:12px;line-height:16px;color:#000;letter-spacing:-0.481px;width:96px;overflow:hidden;">Inherited, TIGHT - fi</span>
<svg class="a" style="left:1875px;top:708.4499999999999px" width="10" height="7"><path d="M1.5 1.5L4.5 4.5L7.5 1.5" stroke="#444" stroke-width="1.2" fill="none"/></svg>
<span class="t" style="left:1668px;top:717.84px;font-size:12px;line-height:16px;color:#000;letter-spacing:-0.503px;">WCS, Surface</span>
<div class="a" style="left:1766px;top:721px;width:123px;height:17px;background:#e3e3e3;border:1px solid #d0d0d0;box-sizing:border-box;"></div>
<span class="t" style="left:1771.7px;top:721.34px;font-size:12px;line-height:16px;color:#000;letter-spacing:-0.481px;width:96px;overflow:hidden;">Inherited, TIGHT - fi</span>
<svg class="a" style="left:1875px;top:726.4499999999999px" width="10" height="7"><path d="M1.5 1.5L4.5 4.5L7.5 1.5" stroke="#444" stroke-width="1.2" fill="none"/></svg>
<span class="t" style="left:1668px;top:736.64px;font-size:12px;line-height:16px;color:#000;letter-spacing:-0.492px;">WCS, Sub-surface</span>
<div class="a" style="left:1766px;top:740px;width:123px;height:16px;background:#e3e3e3;border:1px solid #d0d0d0;box-sizing:border-box;"></div>
<span class="t" style="left:1771.7px;top:740.14px;font-size:12px;line-height:16px;color:#000;letter-spacing:-0.481px;width:96px;overflow:hidden;">Inherited, TIGHT - fi</span>
<svg class="a" style="left:1875px;top:745.15px" width="10" height="7"><path d="M1.5 1.5L4.5 4.5L7.5 1.5" stroke="#444" stroke-width="1.2" fill="none"/></svg>
<span class="t" style="left:1668px;top:754.64px;font-size:12px;line-height:16px;color:#000;letter-spacing:-0.595px;">WCS, Land</span>
<div class="a" style="left:1766px;top:758px;width:123px;height:16px;background:#e3e3e3;border:1px solid #d0d0d0;box-sizing:border-box;"></div>
<span class="t" style="left:1771.7px;top:758.14px;font-size:12px;line-height:16px;color:#000;letter-spacing:-0.481px;width:96px;overflow:hidden;">Inherited, TIGHT - fi</span>
<svg class="a" style="left:1875px;top:763.15px" width="10" height="7"><path d="M1.5 1.5L4.5 4.5L7.5 1.5" stroke="#444" stroke-width="1.2" fill="none"/></svg>
<span class="t" style="left:1668px;top:773.64px;font-size:12px;line-height:16px;color:#000;letter-spacing:-0.444px;">Ignore Plotted</span>
<span class="t" style="left:1668px;top:785.34px;font-size:12px;line-height:16px;color:#000;letter-spacing:-0.531px;">Course</span>
<div class="a" style="left:1766px;top:776px;width:123px;height:23px;background:#e3e3e3;border:1px solid #d0d0d0;box-sizing:border-box;"></div>
<span class="t" style="left:1771.7px;top:776.64px;font-size:12px;line-height:16px;color:#000;letter-spacing:-0.440px;width:96px;overflow:hidden;">Inherited, No</span>
<svg class="a" style="left:1875px;top:784.55px" width="10" height="7"><path d="M1.5 1.5L4.5 4.5L7.5 1.5" stroke="#444" stroke-width="1.2" fill="none"/></svg>
<span class="t" style="left:1668px;top:798.34px;font-size:12px;line-height:16px;color:#000;letter-spacing:-0.527px;">Engage Ambigous</span>
<div class="a" style="left:1766px;top:801px;width:123px;height:17px;background:#e3e3e3;border:1px solid #d0d0d0;box-sizing:border-box;"></div>
<span class="t" style="left:1771.7px;top:801.84px;font-size:12px;line-height:16px;color:#000;letter-spacing:-0.436px;width:96px;overflow:hidden;">Inherited, Pessimist</span>
<svg class="a" style="left:1875px;top:806.4499999999999px" width="10" height="7"><path d="M1.5 1.5L4.5 4.5L7.5 1.5" stroke="#444" stroke-width="1.2" fill="none"/></svg>
<span class="t" style="left:1668px;top:816.64px;font-size:12px;line-height:16px;color:#000;letter-spacing:-0.479px;">Engage</span>
<span class="t" style="left:1668px;top:828.84px;font-size:12px;line-height:16px;color:#000;letter-spacing:-0.490px;">Opportunities</span>
<div class="a" style="left:1766px;top:820px;width:123px;height:23px;background:#e3e3e3;border:1px solid #d0d0d0;box-sizing:border-box;"></div>
<span class="t" style="left:1771.7px;top:820.34px;font-size:12px;line-height:16px;color:#000;letter-spacing:-0.670px;width:96px;overflow:hidden;">Inherited, No (engag</span>
<svg class="a" style="left:1875px;top:828.25px" width="10" height="7"><path d="M1.5 1.5L4.5 4.5L7.5 1.5" stroke="#444" stroke-width="1.2" fill="none"/></svg>
<div class="a" style="left:1663px;top:858px;width:232px;height:35px;border:2px solid #e6e6e6;box-sizing:border-box;border-radius:4px;"></div>
<div class="a" style="left:1669px;top:853px;width:51px;height:12px;background:#b9b9b9;"></div>
<span class="t" style="left:1671.7px;top:848.34px;font-size:12px;line-height:16px;color:#000;letter-spacing:0.066px;">EMCON</span>
<span class="t" style="left:1668px;top:860.34px;font-size:12px;line-height:16px;color:#000;letter-spacing:-0.504px;">Ignore Under</span>
<span class="t" style="left:1668px;top:872.84px;font-size:12px;line-height:16px;color:#000;letter-spacing:-0.477px;">Attack</span>
<div class="a" style="left:1766px;top:864px;width:123px;height:23px;background:#e3e3e3;border:1px solid #d0d0d0;box-sizing:border-box;"></div>
<span class="t" style="left:1771.7px;top:863.34px;font-size:12px;line-height:16px;color:#000;letter-spacing:-0.374px;width:96px;overflow:hidden;">Inherited, Yes</span>
<svg class="a" style="left:1875px;top:872.4px" width="10" height="7"><path d="M1.5 1.5L4.5 4.5L7.5 1.5" stroke="#444" stroke-width="1.2" fill="none"/></svg>
<div class="a" style="left:1663px;top:902px;width:232px;height:84px;border:2px solid #e6e6e6;box-sizing:border-box;border-radius:4px;"></div>
<div class="a" style="left:1669px;top:897px;width:29px;height:12px;background:#b9b9b9;"></div>
<span class="t" style="left:1671.7px;top:892.84px;font-size:12px;line-height:16px;color:#000;letter-spacing:-0.418px;">Misc</span>
<span class="t" style="left:1668px;top:905.34px;font-size:12px;line-height:16px;color:#000;letter-spacing:-0.466px;">Torpedo Range</span>
<div class="a" style="left:1766px;top:909px;width:123px;height:16px;background:#e3e3e3;border:1px solid #d0d0d0;box-sizing:border-box;"></div>
<span class="t" style="left:1771.7px;top:908.64px;font-size:12px;line-height:16px;color:#000;letter-spacing:-0.487px;width:96px;overflow:hidden;">Inherited, Practical r</span>
<svg class="a" style="left:1875px;top:913.9499999999999px" width="10" height="7"><path d="M1.5 1.5L4.5 4.5L7.5 1.5" stroke="#444" stroke-width="1.2" fill="none"/></svg>
<span class="t" style="left:1668px;top:923.34px;font-size:12px;line-height:16px;color:#000;letter-spacing:-0.494px;">Automatic Evasion</span>
<div class="a" style="left:1766px;top:927px;width:123px;height:16px;background:#e3e3e3;border:1px solid #d0d0d0;box-sizing:border-box;"></div>
<span class="t" style="left:1771.7px;top:926.64px;font-size:12px;line-height:16px;color:#000;letter-spacing:-0.374px;width:96px;overflow:hidden;">Inherited, Yes</span>
<svg class="a" style="left:1875px;top:932.15px" width="10" height="7"><path d="M1.5 1.5L4.5 4.5L7.5 1.5" stroke="#444" stroke-width="1.2" fill="none"/></svg>
<span class="t" style="left:1668px;top:942.34px;font-size:12px;line-height:16px;color:#000;letter-spacing:-0.487px;">Use Refuel</span>
<div class="a" style="left:1766px;top:946px;width:123px;height:16px;background:#e3e3e3;border:1px solid #d0d0d0;box-sizing:border-box;"></div>
<span class="t" style="left:1771.7px;top:945.34px;font-size:12px;line-height:16px;color:#000;letter-spacing:-0.385px;width:96px;overflow:hidden;">Inherited, Allow, but</span>
<svg class="a" style="left:1875px;top:950.65px" width="10" height="7"><path d="M1.5 1.5L4.5 4.5L7.5 1.5" stroke="#444" stroke-width="1.2" fill="none"/></svg>
<span class="t" style="left:1668px;top:960.34px;font-size:12px;line-height:16px;color:#000;letter-spacing:-0.388px;">Refuel Allies</span>
<div class="a" style="left:1766px;top:964px;width:123px;height:16px;background:#e3e3e3;border:1px solid #d0d0d0;box-sizing:border-box;"></div>
<span class="t" style="left:1771.7px;top:963.34px;font-size:12px;line-height:16px;color:#000;letter-spacing:-0.374px;width:96px;overflow:hidden;">Inherited, Yes</span>
<svg class="a" style="left:1875px;top:968.9499999999999px" width="10" height="7"><path d="M1.5 1.5L4.5 4.5L7.5 1.5" stroke="#444" stroke-width="1.2" fill="none"/></svg>
<div class="a" style="left:1663px;top:995px;width:232px;height:30px;border:2px solid #e6e6e6;box-sizing:border-box;border-radius:4px;"></div>
<div class="a" style="left:1669px;top:990px;width:43px;height:12px;background:#b9b9b9;"></div>
<span class="t" style="left:1671.7px;top:985.84px;font-size:12px;line-height:16px;color:#000;letter-spacing:-0.431px;">Air Ops</span>
<div class="a" style="left:425px;top:252px;width:1010px;height:719px;background:#f0f0f0;border:1px solid #d8cfa8;box-sizing:border-box;"></div>
<div class="a" style="left:426px;top:253px;width:1008px;height:30px;background:#fff;"></div>
<span class="t" style="left:434.3px;top:259.64px;font-size:12px;line-height:16px;color:#000;letter-spacing:0.048px;">Weapon Allocation</span>
<svg class="a" style="left:1412px;top:260px" width="14" height="14"><path d="M1.5 1.5L11.5 11.5M11.5 1.5L1.5 11.5" stroke="#111" stroke-width="1.2" fill="none"/></svg>
<span class="t" style="left:433.3px;top:285.96px;font-size:16px;line-height:21px;color:#000;letter-spacing:-0.042px;">Attacking unit(s)</span>
<span class="t" style="left:755.5px;top:285.96px;font-size:16px;line-height:21px;color:#000;letter-spacing:-0.082px;">Suitable weapons</span>
<span class="t" style="left:1117.5px;top:285.96px;font-size:16px;line-height:21px;color:#000;letter-spacing:-0.042px;">Weapons allocated by selected attacker(s)</span>
<span class="t" style="left:433.3px;top:629.76px;font-size:16px;line-height:21px;color:#000;letter-spacing:-0.012px;">Selectable target(s)</span>
<span class="t" style="left:1117.5px;top:629.76px;font-size:16px;line-height:21px;color:#000;letter-spacing:0.000px;">Weapons allocated to selected target</span>
<div class="a" style="left:430px;top:311px;width:314px;height:244px;background:#fff;border:1px solid #828790;box-sizing:border-box;"></div>
<div class="a" style="left:431px;top:313px;width:311px;height:15px;background:#3399ff;"></div>
<span class="t" style="left:433.3px;top:314.14px;font-size:12px;line-height:16px;color:#fff;letter-spacing:0.003px;">SSM Bn (DF-31A [CSS-9 Mod-2] TEL) (SSM Bn (DF-31A</span>
<span class="t" style="left:433.3px;top:329.14px;font-size:12px;line-height:16px;color:#000;letter-spacing:0.003px;">SSM Bn (DF-31A [CSS-9 Mod-2] TEL) (SSM Bn (DF-31A</span>
<div class="a" style="left:741px;top:331px;width:1px;height:11px;background:#c99a5a;"></div>
<div class="a" style="left:430px;top:558px;width:314px;height:20px;background:#e1e1e1;border:1px solid #adadad;box-sizing:border-box;"></div>
<span class="t" style="left:495.75px;top:559.82px;font-size:11.5px;line-height:16px;color:#000;letter-spacing:-0.394px;">Weapon Release Authorization (WRA)</span>
<div class="a" style="left:430px;top:581px;width:314px;height:20px;background:#e1e1e1;border:1px solid #adadad;box-sizing:border-box;"></div>
<span class="t" style="left:499.25px;top:582.82px;font-size:11.5px;line-height:16px;color:#000;letter-spacing:-0.458px;">Add selected unit(s) from tactical map</span>
<div class="a" style="left:430px;top:603px;width:314px;height:20px;background:#e1e1e1;border:1px solid #adadad;box-sizing:border-box;"></div>
<span class="t" style="left:511.25px;top:605.62px;font-size:11.5px;line-height:16px;color:#000;letter-spacing:-0.499px;">Remove selected unit(s) from list</span>
<div class="a" style="left:430px;top:656px;width:314px;height:266px;background:#fff;border:1px solid #828790;box-sizing:border-box;overflow:hidden;"></div>
<div class="a" style="left:726px;top:657px;width:17px;height:264px;background:#f0f0f0;"></div>
<div class="a" style="left:726px;top:732px;width:15px;height:17px;background:#cdcdcd;"></div>
<svg class="a" style="left:728px;top:661px" width="12" height="9"><path d="M2 6.5L5.5 3L9 6.5" stroke="#444" stroke-width="1.6" fill="none"/></svg>
<svg class="a" style="left:728px;top:907px" width="12" height="9"><path d="M2 2.5L5.5 6L9 2.5" stroke="#444" stroke-width="1.6" fill="none"/></svg>
<div class="a" style="left:431px;top:702px;width:294px;height:15px;background:#3399ff;"></div>
<span class="t" style="left:433.3px;top:657.84px;font-size:12px;line-height:16px;color:#000;letter-spacing:0.067px;">Hsinchu A/C Tarmac Space (2x Large Aircraft)</span>
<span class="t" style="left:433.3px;top:672.84px;font-size:12px;line-height:16px;color:#000;letter-spacing:0.067px;">Hsinchu A/C Tarmac Space (2x Large Aircraft)</span>
<span class="t" style="left:433.3px;top:687.84px;font-size:12px;line-height:16px;color:#000;letter-spacing:0.067px;">Hsinchu A/C Tarmac Space (2x Large Aircraft)</span>
<span class="t" style="left:433.3px;top:702.84px;font-size:12px;line-height:16px;color:#fff;letter-spacing:0.067px;">Hsinchu A/C Tarmac Space (2x Large Aircraft)</span>
<span class="t" style="left:433.3px;top:717.84px;font-size:12px;line-height:16px;color:#000;letter-spacing:0.067px;">Hsinchu A/C Tarmac Space (2x Large Aircraft)</span>
<span class="t" style="left:433.3px;top:732.84px;font-size:12px;line-height:16px;color:#000;letter-spacing:0.067px;">Hsinchu A/C Tarmac Space (2x Large Aircraft)</span>
<span class="t" style="left:433.3px;top:747.84px;font-size:12px;line-height:16px;color:#000;letter-spacing:0.067px;">Hsinchu A/C Tarmac Space (2x Large Aircraft)</span>
<span class="t" style="left:433.3px;top:762.84px;font-size:12px;line-height:16px;color:#000;letter-spacing:0.067px;">Hsinchu A/C Tarmac Space (2x Large Aircraft)</span>
<span class="t" style="left:433.3px;top:777.84px;font-size:12px;line-height:16px;color:#000;letter-spacing:0.067px;">Hsinchu A/C Tarmac Space (2x Large Aircraft)</span>
<span class="t" style="left:433.3px;top:792.84px;font-size:12px;line-height:16px;color:#000;letter-spacing:0.067px;">Hsinchu A/C Tarmac Space (2x Large Aircraft)</span>
<span class="t" style="left:433.3px;top:807.84px;font-size:12px;line-height:16px;color:#000;letter-spacing:0.067px;">Hsinchu A/C Tarmac Space (2x Large Aircraft)</span>
<span class="t" style="left:433.3px;top:822.84px;font-size:12px;line-height:16px;color:#000;letter-spacing:0.067px;">Hsinchu A/C Tarmac Space (2x Large Aircraft)</span>
<span class="t" style="left:433.3px;top:837.84px;font-size:12px;line-height:16px;color:#000;letter-spacing:0.067px;">Hsinchu A/C Tarmac Space (2x Large Aircraft)</span>
<span class="t" style="left:433.3px;top:852.84px;font-size:12px;line-height:16px;color:#000;letter-spacing:0.067px;">Hsinchu A/C Tarmac Space (2x Large Aircraft)</span>
<span class="t" style="left:433.3px;top:867.84px;font-size:12px;line-height:16px;color:#000;letter-spacing:0.067px;">Hsinchu A/C Tarmac Space (2x Large Aircraft)</span>
<span class="t" style="left:433.3px;top:882.84px;font-size:12px;line-height:16px;color:#000;letter-spacing:0.067px;">Hsinchu A/C Tarmac Space (2x Large Aircraft)</span>
<span class="t" style="left:433.3px;top:897.84px;font-size:12px;line-height:16px;color:#000;letter-spacing:0.067px;">Hsinchu A/C Tarmac Space (2x Large Aircraft)</span>
<div class="a" style="left:430px;top:912px;width:295px;height:8.5px;overflow:hidden">
<span class="t" style="left:3.3px;top:0.84px;font-size:12px;line-height:16px;color:#000;letter-spacing:0.067px;">Hsinchu A/C Tarmac Space (2x Large Aircraft)</span>
</div>
<div class="a" style="left:430px;top:925px;width:314px;height:20px;background:#e1e1e1;border:1px solid #adadad;box-sizing:border-box;"></div>
<span class="t" style="left:491.5px;top:927.12px;font-size:11.5px;line-height:16px;color:#000;letter-spacing:-0.451px;">Add selected targets(s) from tactical map</span>
<div class="a" style="left:430px;top:948px;width:314px;height:20px;background:#e1e1e1;border:1px solid #adadad;box-sizing:border-box;"></div>
<span class="t" style="left:506.25px;top:950.32px;font-size:11.5px;line-height:16px;color:#000;letter-spacing:-0.495px;">Remove selected target(s) from list</span>
<div class="a" style="left:751px;top:311px;width:355px;height:509px;background:#fff;border:1px solid #828790;box-sizing:border-box;"></div>
<svg class="a" style="left:761px;top:319px" width="20" height="9"><rect x="0.5" y="0.5" width="8" height="8" fill="#fff" stroke="#919191"/><path d="M2.5 4.5H6.5" stroke="#4b63a7" stroke-width="1"/><path d="M10 4.5H13" stroke="#808080" stroke-width="1" stroke-dasharray="1 1"/></svg>
<span class="t" style="left:777px;top:314.84px;font-size:12px;line-height:16px;color:#000;letter-spacing:0.080px;">4x DF-31A [1.0mT Nuclear, CSS-9 Mod-2] (1x allocated)</span>
<svg class="a" style="left:784px;top:331px" width="10" height="12"><path d="M0.5 0V10.5H9" stroke="#808080" stroke-width="1" stroke-dasharray="1 1" fill="none"/></svg>
<span class="t" style="left:795.8px;top:332.84px;font-size:12px;line-height:16px;color:#dc1a2e;letter-spacing:0.052px;width:308.5px;overflow:hidden;">4x can NOT fire. Weapon cannot engage this target for ar</span>
<div class="a" style="left:752px;top:802px;width:353px;height:16px;background:#f0f0f0;"></div>
<div class="a" style="left:770px;top:803px;width:200px;height:15px;background:#cdcdcd;"></div>
<svg class="a" style="left:755.3px;top:805px" width="9" height="11"><path d="M6 1.5L2.5 5L6 8.5" stroke="#444" stroke-width="1.6" fill="none"/></svg>
<svg class="a" style="left:1092.8px;top:805px" width="9" height="11"><path d="M3 1.5L6.5 5L3 8.5" stroke="#444" stroke-width="1.6" fill="none"/></svg>
<div class="a" style="left:751px;top:823px;width:277px;height:20px;background:#e1e1e1;border:1px solid #adadad;box-sizing:border-box;"></div>
<span class="t" style="left:798.55px;top:825.02px;font-size:11.5px;line-height:16px;color:#000;letter-spacing:-0.415px;">Allocate weapons to selected target(s):</span>
<div class="a" style="left:1032px;top:824px;width:74px;height:18px;background:#fff;border:1px solid #abadb3;box-sizing:border-box;"></div>
<span class="t" style="left:1034px;top:824.34px;font-size:12px;line-height:16px;color:#000;">1</span>
<svg class="a" style="left:1090px;top:825px" width="14" height="16"><rect x="0.5" y="0.5" width="13" height="7" fill="#f0f0f0" stroke="#c8c8c8"/><rect x="0.5" y="8.5" width="13" height="7" fill="#f0f0f0" stroke="#c8c8c8"/><path d="M4.5 5.5L7 3L9.5 5.5Z" fill="#111"/><path d="M4.5 10.5L7 13L9.5 10.5Z" fill="#111"/></svg>
<div class="a" style="left:751px;top:846px;width:355px;height:19px;background:#e1e1e1;border:1px solid #adadad;box-sizing:border-box;"></div>
<span class="t" style="left:837.05px;top:847.62px;font-size:11.5px;line-height:16px;color:#000;letter-spacing:-0.379px;">Allocate one salvo to selected target(s)</span>
<div class="a" style="left:751px;top:869px;width:355px;height:19px;background:#e1e1e1;border:1px solid #adadad;box-sizing:border-box;"></div>
<span class="t" style="left:853.3px;top:870.62px;font-size:11.5px;line-height:16px;color:#000;letter-spacing:-0.399px;">Allocate all weapons of this type</span>
<svg class="a" style="left:755px;top:927px" width="13" height="13" viewBox="0 0 13 13"><rect x="0.5" y="0.5" width="12" height="12" fill="#fff" stroke="#333"/><path d="M2.8 6.6L5.3 9.3L10.3 3.2" stroke="#222" stroke-width="1.3" fill="none"/></svg>
<span class="t" style="left:774px;top:894.49px;font-size:11px;line-height:15px;color:#000;letter-spacing:-0.156px;">Enable automatic salvo cancellation when last weapon in first volley</span>
<span class="t" style="left:774px;top:907.52px;font-size:11px;line-height:15px;color:#000;letter-spacing:-0.146px;">impacts, or after 40 seconds if weapons cannot be fired. Note!</span>
<span class="t" style="left:774px;top:920.55px;font-size:11px;line-height:15px;color:#000;letter-spacing:-0.187px;">Disabling salvo cancellation will not drop salvos until all weapons</span>
<span class="t" style="left:774px;top:933.58px;font-size:11px;line-height:15px;color:#000;letter-spacing:-0.207px;">have been fired, and may prevent other units from automatically firing</span>
<span class="t" style="left:774px;top:946.61px;font-size:11px;line-height:15px;color:#000;letter-spacing:-0.171px;">at a contact should it move out of firing parameters!</span>
<svg class="a" style="left:925.7px;top:295px" width="13" height="13"><rect x="0.5" y="0.5" width="12" height="12" fill="#fff" stroke="#333"/></svg>
<span class="t" style="left:945.5px;top:294.32px;font-size:11.5px;line-height:16px;color:#000;letter-spacing:-0.490px;">Show Automatic Fire Information</span>
<div class="a" style="left:1114px;top:334px;width:315px;height:265px;background:#fff;border:1px solid #dadada;box-sizing:border-box;"></div>
<div class="a" style="left:1266px;top:313px;width:73px;height:21px;background:#f0f0f0;border:1px solid #dadada;box-sizing:border-box;border-bottom:none;"></div>
<span class="t" style="left:1271.3px;top:315.30px;font-size:13px;line-height:18px;color:#000;letter-spacing:0.444px;">To anyone</span>
<div class="a" style="left:1114px;top:311px;width:152px;height:24px;background:#fff;border:1px solid #dadada;box-sizing:border-box;border-bottom:none;"></div>
<span class="t" style="left:1122.5px;top:313.60px;font-size:13px;line-height:18px;color:#000;letter-spacing:0.236px;">To selected target only</span>
<div class="a" style="left:1121px;top:339px;width:303px;height:255px;background:#fff;border:1px solid #828790;box-sizing:border-box;"></div>
<svg class="a" style="left:1130px;top:347px" width="20" height="9"><rect x="0.5" y="0.5" width="8" height="8" fill="#fff" stroke="#919191"/><path d="M2.5 4.5H6.5" stroke="#4b63a7" stroke-width="1"/><path d="M10 4.5H13" stroke="#808080" stroke-width="1" stroke-dasharray="1 1"/></svg>
<span class="t" style="left:1146.3px;top:342.84px;font-size:12px;line-height:16px;color:#000;letter-spacing:-0.041px;">By: SSM Bn (DF-31A [CSS-9 Mod-2] TEL)</span>
<svg class="a" style="left:1153px;top:359px" width="10" height="12"><path d="M0.5 0V10.5H9" stroke="#808080" stroke-width="1" stroke-dasharray="1 1" fill="none"/></svg>
<div class="a" style="left:1163px;top:359px;width:260px;height:18px;background:#3399ff;"></div>
<span class="t" style="left:1165px;top:360.84px;font-size:12px;line-height:16px;color:#fff;letter-spacing:0.055px;width:256.5px;overflow:hidden;">Alloc: 1x DF-31A [1.0mT Nuclear, CSS-9 Mod-2]</span>
<div class="a" style="left:1122px;top:576px;width:301px;height:16px;background:#f0f0f0;"></div>
<div class="a" style="left:1139px;top:577px;width:260px;height:15px;background:#cdcdcd;"></div>
<svg class="a" style="left:1124.5px;top:579px" width="9" height="11"><path d="M6 1.5L2.5 5L6 8.5" stroke="#444" stroke-width="1.6" fill="none"/></svg>
<svg class="a" style="left:1411.0px;top:579px" width="9" height="11"><path d="M3 1.5L6.5 5L3 8.5" stroke="#444" stroke-width="1.6" fill="none"/></svg>
<div class="a" style="left:1118px;top:603px;width:71px;height:21px;background:#cccccc;border:1px solid #bfbfbf;box-sizing:border-box;"></div>
<span class="t" style="left:1127.5px;top:606.12px;font-size:11.5px;line-height:16px;color:#9a9a9a;letter-spacing:-0.530px;">Plot course</span>
<div class="a" style="left:1197px;top:603px;width:74px;height:21px;background:#cccccc;border:1px solid #bfbfbf;box-sizing:border-box;"></div>
<span class="t" style="left:1204.7px;top:606.12px;font-size:11.5px;line-height:16px;color:#9a9a9a;letter-spacing:-0.575px;">Clear course</span>
<div class="a" style="left:1321px;top:603px;width:110px;height:21px;background:#e1e1e1;border:1px solid #adadad;box-sizing:border-box;"></div>
<span class="t" style="left:1328.05px;top:606.12px;font-size:11.5px;line-height:16px;color:#000;letter-spacing:-0.425px;">De-allocate selected</span>
<div class="a" style="left:1114px;top:678px;width:315px;height:265px;background:#fff;border:1px solid #dadada;box-sizing:border-box;"></div>
<div class="a" style="left:1293px;top:658px;width:73px;height:20px;background:#f0f0f0;border:1px solid #dadada;box-sizing:border-box;border-bottom:none;"></div>
<span class="t" style="left:1298.3px;top:659.50px;font-size:13px;line-height:18px;color:#000;letter-spacing:0.174px;">By anyone</span>
<div class="a" style="left:1114px;top:656px;width:180px;height:23px;background:#fff;border:1px solid #dadada;box-sizing:border-box;border-bottom:none;"></div>
<span class="t" style="left:1121.3px;top:657.80px;font-size:13px;line-height:18px;color:#000;letter-spacing:0.154px;">By selected attacker(s) only</span>
<div class="a" style="left:1121px;top:684px;width:303px;height:254px;background:#fff;border:1px solid #828790;box-sizing:border-box;"></div>
<svg class="a" style="left:1130px;top:691px" width="20" height="9"><rect x="0.5" y="0.5" width="8" height="8" fill="#fff" stroke="#919191"/><path d="M2.5 4.5H6.5" stroke="#4b63a7" stroke-width="1"/><path d="M10 4.5H13" stroke="#808080" stroke-width="1" stroke-dasharray="1 1"/></svg>
<span class="t" style="left:1146.3px;top:687.14px;font-size:12px;line-height:16px;color:#000;letter-spacing:-0.041px;">By: SSM Bn (DF-31A [CSS-9 Mod-2] TEL)</span>
<svg class="a" style="left:1153px;top:703px" width="10" height="12"><path d="M0.5 0V10.5H9" stroke="#808080" stroke-width="1" stroke-dasharray="1 1" fill="none"/></svg>
<span class="t" style="left:1165px;top:704.84px;font-size:12px;line-height:16px;color:#000;letter-spacing:0.055px;width:257.5px;overflow:hidden;">Alloc: 1x DF-31A [1.0mT Nuclear, CSS-9 Mod-2]</span>
<div class="a" style="left:1122px;top:920px;width:301px;height:16px;background:#f0f0f0;"></div>
<div class="a" style="left:1139px;top:921px;width:263px;height:15px;background:#cdcdcd;"></div>
<svg class="a" style="left:1124.5px;top:923.3px" width="9" height="11"><path d="M6 1.5L2.5 5L6 8.5" stroke="#444" stroke-width="1.6" fill="none"/></svg>
<svg class="a" style="left:1411.0px;top:923.3px" width="9" height="11"><path d="M3 1.5L6.5 5L3 8.5" stroke="#444" stroke-width="1.6" fill="none"/></svg>
<div class="a" style="left:1118px;top:946px;width:71px;height:21px;background:#cccccc;border:1px solid #bfbfbf;box-sizing:border-box;"></div>
<span class="t" style="left:1127.5px;top:949.12px;font-size:11.5px;line-height:16px;color:#9a9a9a;letter-spacing:-0.530px;">Plot course</span>
<div class="a" style="left:1197px;top:946px;width:74px;height:21px;background:#cccccc;border:1px solid #bfbfbf;box-sizing:border-box;"></div>
<span class="t" style="left:1204.7px;top:949.12px;font-size:11.5px;line-height:16px;color:#9a9a9a;letter-spacing:-0.575px;">Clear course</span>
<div class="a" style="left:1321px;top:946px;width:110px;height:21px;background:#cccccc;border:1px solid #bfbfbf;box-sizing:border-box;"></div>
<span class="t" style="left:1328.05px;top:949.12px;font-size:11.5px;line-height:16px;color:#9a9a9a;letter-spacing:-0.425px;">De-allocate selected</span>
<div class="a" style="left:1186px;top:370px;width:250px;height:25px;background:rgba(0,0,0,0.18);filter:blur(2px);"></div>
<div class="a" style="left:1183px;top:367px;width:250px;height:25px;background:#f2f2f2;border:1px solid #a0a0a0;box-sizing:border-box;"></div>
<div class="a" style="left:1185px;top:369px;width:247px;height:21px;background:#c6e0fb;border:1px solid #64a5e6;box-sizing:border-box;"></div>
<span class="t" style="left:1219.3px;top:371.64px;font-size:12px;line-height:16px;color:#000;letter-spacing:0.007px;">Special: High Altitude Detonation</span>
<div class="a" style="left:0px;top:997px;width:1920px;height:83px;background:#000;"></div>
<svg class="a" style="left:0;top:997px" width="1920" height="83" viewBox="0 997 1920 83"><g fill="none" stroke="#fff" stroke-width="2"><path d="M32 1010H10V1022.5"/><path d="M10 1052.5V1066.5H32"/><path d="M1886 1010H1908V1022.5"/><path d="M1908 1052.5V1066.5H1886"/></g><g fill="none" stroke="#8c8c8c" stroke-width="1"><path d="M21.5 1026V1022.5H1893.5V1026"/><path d="M21.5 1049V1053.5H1893.5V1049"/></g></svg>
<span class="t" style="left:674px;top:1014.53px;font-size:38px;line-height:48px;color:#fff;font-weight:bold;transform:scaleX(0.7243);transform-origin:0 0;">HIGH ALTITUDE NUCLEAR EMP STRIKE</span>
</body></html>
